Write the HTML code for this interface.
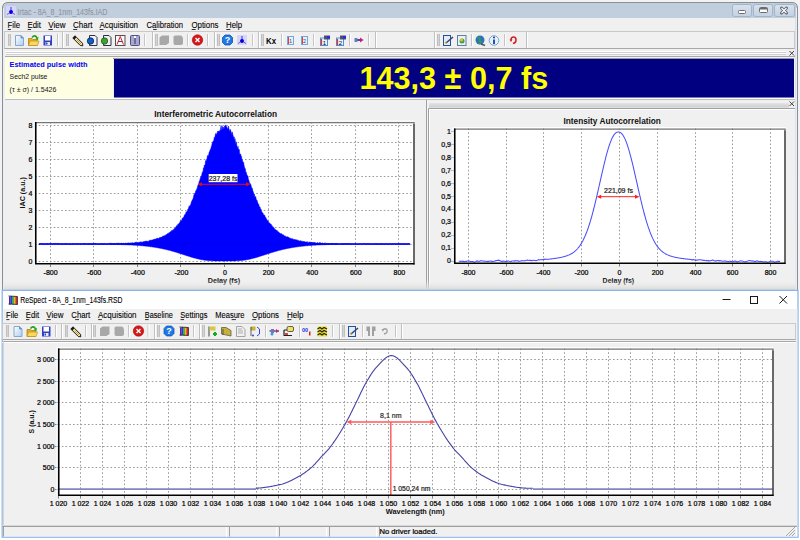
<!DOCTYPE html><html><head><meta charset="utf-8"><style>*{margin:0;padding:0}html,body{width:800px;height:540px;overflow:hidden;background:#fff;position:relative;font-family:"Liberation Sans",sans-serif}</style></head><body><svg width="800" height="540" style="position:absolute;left:0;top:0"><defs><linearGradient id="tbar" x1="0" y1="0" x2="0" y2="1"><stop offset="0" stop-color="#bfcddc"/><stop offset="1" stop-color="#d7e5f2"/></linearGradient><linearGradient id="wbtn" x1="0" y1="0" x2="0" y2="1"><stop offset="0" stop-color="#d8e2ee"/><stop offset="1" stop-color="#c3d1e1"/></linearGradient><linearGradient id="hdr" x1="0" y1="0" x2="0" y2="1"><stop offset="0" stop-color="#e4e4e4"/><stop offset="1" stop-color="#cdcdcd"/></linearGradient></defs>
<rect x="0" y="0" width="800" height="290" fill="#f2f2f2"/>
<path d="M2.5 290 V8 Q2.5 2.5 8 2.5 H792 Q797.5 2.5 797.5 8 V290" fill="url(#tbar)" stroke="#8a8f96" stroke-width="1"/>
<line x1="3.5" y1="8" x2="3.5" y2="290" stroke="#e6eef8" stroke-width="1"/>
<line x1="796.5" y1="8" x2="796.5" y2="290" stroke="#e6eef8" stroke-width="1"/>
<rect x="4" y="18" width="791.5" height="272" fill="#f0f0f0"/>
<g transform="translate(6,6)"><rect x="0" y="0" width="10" height="10" fill="#d8d4fc"/><path d="M5 1 V5" stroke="#3030f0" stroke-width="1"/><circle cx="5" cy="6" r="2" fill="#0000e0"/><path d="M1 8.5 L3.5 7 M9 8.5 L6.5 7" stroke="#5050a0" stroke-width="0.8"/></g>
<text x="17.61" y="14.5" font-family="Liberation Sans" font-size="8.2" fill="#8d96a0" stroke="#8d96a0" stroke-width="0.1" text-anchor="start" textLength="89.78" lengthAdjust="spacingAndGlyphs">Irtac - 8A_8_1nm_143fs.IAD</text>
<rect x="732.5" y="4.5" width="19" height="12" rx="2" fill="url(#wbtn)" stroke="#a5b3c6" stroke-width="1"/>
<rect x="753.5" y="4.5" width="19" height="12" rx="2" fill="url(#wbtn)" stroke="#a5b3c6" stroke-width="1"/>
<rect x="774.5" y="4.5" width="20" height="12" rx="2" fill="url(#wbtn)" stroke="#a5b3c6" stroke-width="1"/>
<rect x="738.5" y="10.5" width="7" height="3" rx="1" fill="#fff" stroke="#6a6a6a" stroke-width="1"/>
<rect x="759.5" y="7.5" width="8" height="5" rx="1" fill="#fff" stroke="#6a6a6a" stroke-width="1"/><rect x="760" y="8" width="7" height="1.5" fill="#6a6a6a"/>
<path d="M781.5 8 L786.5 13 M786.5 8 L781.5 13" stroke="#5d646c" stroke-width="3" stroke-linecap="round"/><path d="M781.5 8 L786.5 13 M786.5 8 L781.5 13" stroke="#ffffff" stroke-width="1.2"/>
<text x="7.56" y="28" font-family="Liberation Sans" font-size="9" fill="#000" stroke="#000" stroke-width="0.1" text-anchor="start" textLength="12.48" lengthAdjust="spacingAndGlyphs">File</text>
<line x1="7.8" y1="29.5" x2="10.95" y2="29.5" stroke="#000" stroke-width="0.8"/>
<text x="27.46" y="28" font-family="Liberation Sans" font-size="9" fill="#000" stroke="#000" stroke-width="0.1" text-anchor="start" textLength="13.38" lengthAdjust="spacingAndGlyphs">Edit</text>
<line x1="27.7" y1="29.5" x2="31.07" y2="29.5" stroke="#000" stroke-width="0.8"/>
<text x="48.26" y="28" font-family="Liberation Sans" font-size="9" fill="#000" stroke="#000" stroke-width="0.1" text-anchor="start" textLength="17.28" lengthAdjust="spacingAndGlyphs">View</text>
<line x1="48.5" y1="29.5" x2="52.85" y2="29.5" stroke="#000" stroke-width="0.8"/>
<text x="72.96" y="28" font-family="Liberation Sans" font-size="9" fill="#000" stroke="#000" stroke-width="0.1" text-anchor="start" textLength="19.58" lengthAdjust="spacingAndGlyphs">Chart</text>
<line x1="73.2" y1="29.5" x2="77.2" y2="29.5" stroke="#000" stroke-width="0.8"/>
<text x="99.46" y="28" font-family="Liberation Sans" font-size="9" fill="#000" stroke="#000" stroke-width="0.1" text-anchor="start" textLength="38.58" lengthAdjust="spacingAndGlyphs">Acquisition</text>
<line x1="99.7" y1="29.5" x2="103.41" y2="29.5" stroke="#000" stroke-width="0.8"/>
<text x="146.46" y="28" font-family="Liberation Sans" font-size="9" fill="#000" stroke="#000" stroke-width="0.1" text-anchor="start" textLength="36.58" lengthAdjust="spacingAndGlyphs">Calibration</text>
<line x1="153.15" y1="29.5" x2="156.68" y2="29.5" stroke="#000" stroke-width="0.8"/>
<text x="191.46" y="28" font-family="Liberation Sans" font-size="9" fill="#000" stroke="#000" stroke-width="0.1" text-anchor="start" textLength="27.08" lengthAdjust="spacingAndGlyphs">Options</text>
<line x1="191.7" y1="29.5" x2="195.71" y2="29.5" stroke="#000" stroke-width="0.8"/>
<text x="226.06" y="28" font-family="Liberation Sans" font-size="9" fill="#000" stroke="#000" stroke-width="0.1" text-anchor="start" textLength="16.08" lengthAdjust="spacingAndGlyphs">Help</text>
<line x1="226.3" y1="29.5" x2="230.35" y2="29.5" stroke="#000" stroke-width="0.8"/>
<rect x="4.5" y="31.5" width="790" height="17" fill="#f0f0f0" stroke="#c9c9c9" stroke-width="1"/>
<line x1="4.5" y1="48.5" x2="794.5" y2="48.5" stroke="#a8a8a8" stroke-width="1"/>
<rect x="8" y="34" width="3" height="12" fill="#d4d4d4"/><line x1="8.5" y1="34" x2="8.5" y2="46" stroke="#c0c0c0" stroke-width="1"/><line x1="10.5" y1="34" x2="10.5" y2="46" stroke="#c0c0c0" stroke-width="1"/>
<g transform="translate(15,35)"><defs><linearGradient id="gdn" x1="0" y1="0" x2="1" y2="1"><stop offset="0" stop-color="#ffffff"/><stop offset="1" stop-color="#a9cdf3"/></linearGradient></defs><path d="M0.5 0.5 H6 L8.5 3 V10.5 H0.5Z" fill="url(#gdn)" stroke="#8aa6c8" stroke-width="1"/><path d="M6 0.5 V3 H8.5" fill="#6a9ad8" stroke="#5a8ac8" stroke-width="0.8"/></g>
<g transform="translate(28,35)"><path d="M0.5 3.5 H4 L5 4.5 H9 V10.5 H0.5Z" fill="#e8b020" stroke="#b08010" stroke-width="0.8"/><path d="M0.5 10.5 L2 6 H11 L9.5 10.5Z" fill="#f8d860" stroke="#c09020" stroke-width="0.7"/><path d="M4 2.5 C6 0 8 0.5 9 3" fill="none" stroke="#20a020" stroke-width="1.6"/><path d="M7.5 3.5 L10.5 1.8 L10 5.5Z" fill="#20b020"/></g>
<g transform="translate(43,35)"><path d="M0.5 0.5 H9 V10.5 H0.5Z" fill="#3040c0"/><rect x="2" y="1" width="5.5" height="4.5" fill="#fff"/><rect x="2.5" y="7" width="4.5" height="3" fill="#e8e8f8"/><rect x="3" y="7.5" width="1.5" height="2" fill="#3040c0"/></g>
<line x1="57.5" y1="34" x2="57.5" y2="46" stroke="#c4c4c4" stroke-width="1"/><line x1="58.5" y1="34" x2="58.5" y2="46" stroke="#ffffff" stroke-width="1"/>
<line x1="62.5" y1="32" x2="62.5" y2="48" stroke="#c0c0c0" stroke-width="1"/><line x1="63.5" y1="32" x2="63.5" y2="48" stroke="#ffffff" stroke-width="1"/>
<rect x="66" y="34" width="3" height="12" fill="#d4d4d4"/><line x1="66.5" y1="34" x2="66.5" y2="46" stroke="#c0c0c0" stroke-width="1"/><line x1="68.5" y1="34" x2="68.5" y2="46" stroke="#c0c0c0" stroke-width="1"/>
<g transform="translate(72,35)"><path d="M0.8 3 L3 0.8 L10.5 8.3 L10.8 10.8 L8.3 10.5 Z" fill="#f0e0a0" stroke="#1a1a1a" stroke-width="1"/><path d="M2.2 4.2 L4.2 2.2 M4.5 4.5 L9 9" stroke="#c8a040" stroke-width="1"/><path d="M0.8 3 L3 0.8 L4.5 2.3 L2.3 4.5Z" fill="#1a1a1a"/></g>
<g transform="translate(87,35)"><path d="M2.5 0.5 H8 L10 2.5 V10.5 H2.5Z" fill="#f0f0f8" stroke="#303040" stroke-width="1"/><circle cx="3.5" cy="6" r="3.2" fill="#1060c0" stroke="#002060" stroke-width="0.8"/></g>
<g transform="translate(101,35)"><path d="M2.5 0.5 H8 L10 2.5 V10.5 H2.5Z" fill="#f0f0f8" stroke="#303040" stroke-width="1"/><circle cx="3.5" cy="6" r="3.2" fill="#40a030" stroke="#206010" stroke-width="0.8"/></g>
<g transform="translate(115,35)"><rect x="0.5" y="0.5" width="9.5" height="10" fill="#f8f8f8" stroke="#505050" stroke-width="1"/><path d="M2 9.5 L5.25 1.5 L8.5 9.5 M3.2 6.5 H7.3" fill="none" stroke="#e02020" stroke-width="1"/><path d="M3.5 6.5 H7" stroke="#2040d0" stroke-width="0.8"/></g>
<g transform="translate(130,35)"><rect x="0.5" y="0.5" width="9" height="10" rx="1" fill="#a8a8d0" stroke="#505080" stroke-width="1"/><path d="M5 2 V9" stroke="#303070" stroke-width="1"/><rect x="4" y="1" width="2" height="2" fill="#fff"/></g>
<line x1="144.5" y1="34" x2="144.5" y2="46" stroke="#c4c4c4" stroke-width="1"/><line x1="145.5" y1="34" x2="145.5" y2="46" stroke="#ffffff" stroke-width="1"/>
<line x1="152.5" y1="32" x2="152.5" y2="48" stroke="#c0c0c0" stroke-width="1"/><line x1="153.5" y1="32" x2="153.5" y2="48" stroke="#ffffff" stroke-width="1"/>
<rect x="155" y="34" width="3" height="12" fill="#d4d4d4"/><line x1="155.5" y1="34" x2="155.5" y2="46" stroke="#c0c0c0" stroke-width="1"/><line x1="157.5" y1="34" x2="157.5" y2="46" stroke="#c0c0c0" stroke-width="1"/>
<g transform="translate(159,35)"><path d="M0.5 2.5 L3 0.5 H10 V8 L7 10 H0.5Z" fill="#a8a8a8"/></g>
<g transform="translate(173,35)"><path d="M0.5 1.5 Q0.5 0.5 3 0.5 H8 Q10 1 10 4 V8 Q10 10 7 10 H2 Q0.5 10 0.5 8Z" fill="#a8a8a8"/></g>
<line x1="187.5" y1="34" x2="187.5" y2="46" stroke="#c4c4c4" stroke-width="1"/><line x1="188.5" y1="34" x2="188.5" y2="46" stroke="#ffffff" stroke-width="1"/>
<g transform="translate(192,34.5)"><circle cx="5.5" cy="5.5" r="5.2" fill="#d81818" stroke="#a00000" stroke-width="0.6"/><path d="M3.5 3.5 L7.5 7.5 M7.5 3.5 L3.5 7.5" stroke="#fff" stroke-width="1.4"/></g>
<line x1="207.5" y1="34" x2="207.5" y2="46" stroke="#c4c4c4" stroke-width="1"/><line x1="208.5" y1="34" x2="208.5" y2="46" stroke="#ffffff" stroke-width="1"/>
<line x1="214.5" y1="32" x2="214.5" y2="48" stroke="#c0c0c0" stroke-width="1"/><line x1="215.5" y1="32" x2="215.5" y2="48" stroke="#ffffff" stroke-width="1"/>
<rect x="217" y="34" width="3" height="12" fill="#d4d4d4"/><line x1="217.5" y1="34" x2="217.5" y2="46" stroke="#c0c0c0" stroke-width="1"/><line x1="219.5" y1="34" x2="219.5" y2="46" stroke="#c0c0c0" stroke-width="1"/>
<g transform="translate(222,34.5)"><path d="M3 0.5 H8 L10.5 3 V8 L8 10.5 H3 L0.5 8 V3Z" fill="#1e78e8" stroke="#0a4aa0" stroke-width="0.7"/><text x="5.5" y="8.8" text-anchor="middle" font-family="Liberation Sans" font-weight="bold" font-size="9" fill="#fff">?</text></g>
<g transform="translate(237,35)"><rect x="0" y="0" width="10" height="10" fill="#d8d4fc"/><path d="M5 1 V5" stroke="#3030f0" stroke-width="1"/><circle cx="5" cy="6" r="2" fill="#0000e0"/><path d="M1 8.5 L3.5 7 M9 8.5 L6.5 7" stroke="#5050a0" stroke-width="0.8"/></g>
<line x1="252.5" y1="34" x2="252.5" y2="46" stroke="#c4c4c4" stroke-width="1"/><line x1="253.5" y1="34" x2="253.5" y2="46" stroke="#ffffff" stroke-width="1"/>
<line x1="258.5" y1="32" x2="258.5" y2="48" stroke="#c0c0c0" stroke-width="1"/><line x1="259.5" y1="32" x2="259.5" y2="48" stroke="#ffffff" stroke-width="1"/>
<rect x="261" y="34" width="3" height="12" fill="#d4d4d4"/><line x1="261.5" y1="34" x2="261.5" y2="46" stroke="#c0c0c0" stroke-width="1"/><line x1="263.5" y1="34" x2="263.5" y2="46" stroke="#c0c0c0" stroke-width="1"/>
<text x="266" y="43.5" font-family="Liberation Sans" font-weight="bold" font-size="8.5" fill="#000" textLength="10" lengthAdjust="spacingAndGlyphs">Kx</text>
<line x1="281.5" y1="34" x2="281.5" y2="46" stroke="#c4c4c4" stroke-width="1"/><line x1="282.5" y1="34" x2="282.5" y2="46" stroke="#ffffff" stroke-width="1"/>
<g transform="translate(287,35)"><rect x="0.5" y="1.5" width="6" height="8" fill="#e8f0f8" stroke="#70a8e0" stroke-width="1"/><path d="M1.5 2 V9" stroke="#e04040" stroke-width="1"/><text x="3.5" y="8" font-family="Liberation Sans" font-size="5.5" fill="#404080" text-anchor="middle">1</text></g>
<g transform="translate(301,35)"><rect x="0.5" y="1.5" width="6" height="8" fill="#e8f0f8" stroke="#70a8e0" stroke-width="1"/><path d="M1.5 2 V9" stroke="#e04040" stroke-width="1"/><text x="3.5" y="8" font-family="Liberation Sans" font-size="5.5" fill="#404080" text-anchor="middle">2</text></g>
<line x1="313.5" y1="34" x2="313.5" y2="46" stroke="#c4c4c4" stroke-width="1"/><line x1="314.5" y1="34" x2="314.5" y2="46" stroke="#ffffff" stroke-width="1"/>
<g transform="translate(320,35)"><rect x="0.5" y="3" width="7" height="7.5" fill="#f0f4fa" stroke="#4a90d8" stroke-width="1"/><rect x="4" y="0.5" width="6" height="4" fill="#505070"/><rect x="7" y="1" width="3" height="2.5" fill="#2030e0"/><path d="M1.5 4 V10" stroke="#e03030" stroke-width="1.3"/><text x="4.5" y="9.5" font-family="Liberation Sans" font-size="6" fill="#000" text-anchor="middle">1</text></g>
<g transform="translate(336,35)"><rect x="0.5" y="3" width="7" height="7.5" fill="#f0f4fa" stroke="#4a90d8" stroke-width="1"/><rect x="4" y="0.5" width="6" height="4" fill="#505070"/><rect x="7" y="1" width="3" height="2.5" fill="#2030e0"/><path d="M1.5 4 V10" stroke="#e03030" stroke-width="1.3"/><text x="4.5" y="9.5" font-family="Liberation Sans" font-size="6" fill="#000" text-anchor="middle">2</text></g>
<line x1="349.5" y1="34" x2="349.5" y2="46" stroke="#c4c4c4" stroke-width="1"/><line x1="350.5" y1="34" x2="350.5" y2="46" stroke="#ffffff" stroke-width="1"/>
<g transform="translate(354,35)"><path d="M1 5 H8" stroke="#704090" stroke-width="2"/><path d="M6 2.5 L9.5 5 L6 7.5Z" fill="#c02080"/><rect x="0.5" y="3" width="3" height="4" fill="#6080c0"/></g>
<line x1="368.5" y1="34" x2="368.5" y2="46" stroke="#c4c4c4" stroke-width="1"/><line x1="369.5" y1="34" x2="369.5" y2="46" stroke="#ffffff" stroke-width="1"/>
<line x1="375.5" y1="32" x2="375.5" y2="48" stroke="#c0c0c0" stroke-width="1"/><line x1="376.5" y1="32" x2="376.5" y2="48" stroke="#ffffff" stroke-width="1"/>
<line x1="434.5" y1="32" x2="434.5" y2="48" stroke="#c0c0c0" stroke-width="1"/><line x1="435.5" y1="32" x2="435.5" y2="48" stroke="#ffffff" stroke-width="1"/>
<rect x="437" y="34" width="3" height="12" fill="#d4d4d4"/><line x1="437.5" y1="34" x2="437.5" y2="46" stroke="#c0c0c0" stroke-width="1"/><line x1="439.5" y1="34" x2="439.5" y2="46" stroke="#c0c0c0" stroke-width="1"/>
<g transform="translate(443,35)"><rect x="0.5" y="0.5" width="7" height="10" fill="#e0ecf8" stroke="#2050a0" stroke-width="1"/><path d="M3 8 L10 2" stroke="#404060" stroke-width="1.5"/><path d="M2 7 L3.5 8.5" stroke="#e0a020" stroke-width="1.2"/></g>
<g transform="translate(457,35)"><rect x="0.5" y="0.5" width="8.5" height="10" fill="#e8f0f8" stroke="#6080a0" stroke-width="1"/><circle cx="5" cy="6" r="2.5" fill="#40a040"/><circle cx="4.5" cy="5" r="1.5" fill="#e8c030"/></g>
<line x1="471.5" y1="34" x2="471.5" y2="46" stroke="#c4c4c4" stroke-width="1"/><line x1="472.5" y1="34" x2="472.5" y2="46" stroke="#ffffff" stroke-width="1"/>
<g transform="translate(475,35)"><circle cx="5" cy="5" r="4.5" fill="#3070c0"/><path d="M2 3 Q4 2 5 4 Q4 6 6 7 L4 9" fill="none" stroke="#30a040" stroke-width="1.6"/><path d="M6 9 L10 10.5" stroke="#505070" stroke-width="1.5"/></g>
<g transform="translate(489,35)"><circle cx="5" cy="5.5" r="4.8" fill="#e8f0f8" stroke="#6090c8" stroke-width="0.8"/><path d="M5 4.5 V9" stroke="#1040a0" stroke-width="1.8"/><circle cx="5" cy="2.5" r="1" fill="#1040a0"/></g>
<line x1="504.5" y1="34" x2="504.5" y2="46" stroke="#c4c4c4" stroke-width="1"/><line x1="505.5" y1="34" x2="505.5" y2="46" stroke="#ffffff" stroke-width="1"/>
<g transform="translate(509,35)"><path d="M2 5 Q2 2 4.5 2 Q7 2 7 5 Q7 8 4 8.5" fill="none" stroke="#d02020" stroke-width="1.5"/><path d="M0.5 4.5 L3.5 4.5 L2 7Z" fill="#d02020"/></g>
<line x1="526.5" y1="32" x2="526.5" y2="48" stroke="#c0c0c0" stroke-width="1"/><line x1="527.5" y1="32" x2="527.5" y2="48" stroke="#ffffff" stroke-width="1"/>
<rect x="5" y="49" width="790" height="8" fill="#f0f0f0"/>
<line x1="6" y1="52.5" x2="786" y2="52.5" stroke="#cfcfcf" stroke-width="1"/>
<line x1="6" y1="54.5" x2="786" y2="54.5" stroke="#cfcfcf" stroke-width="1"/>
<line x1="6" y1="51.5" x2="786" y2="51.5" stroke="#ffffff" stroke-width="1"/>
<line x1="6" y1="53.5" x2="786" y2="53.5" stroke="#ffffff" stroke-width="1"/>
<path d="M789.5 51 L794 55.5 M794 51 L789.5 55.5" stroke="#404040" stroke-width="1"/>
<line x1="5" y1="56.5" x2="795" y2="56.5" stroke="#a9a9a9" stroke-width="1"/>
<rect x="5" y="57" width="108" height="42" fill="#fefee3"/>
<rect x="113" y="57" width="682" height="42" fill="#f0f0f0"/>
<rect x="113" y="58" width="681" height="1" fill="#9a9a9a"/>
<rect x="114" y="59" width="680" height="38.5" fill="#000080"/>
<text x="9.56" y="66.8" font-family="Liberation Sans" font-size="7.3" font-weight="bold" fill="#0000ff" text-anchor="start" textLength="77.88" lengthAdjust="spacingAndGlyphs">Estimated pulse width</text>
<text x="9.58" y="78.8" font-family="Liberation Sans" font-size="7" fill="#141414" text-anchor="start" textLength="37.84" lengthAdjust="spacingAndGlyphs">Sech2 pulse</text>
<text x="9.58" y="91.8" font-family="Liberation Sans" font-size="7" fill="#141414" text-anchor="start" textLength="46.84" lengthAdjust="spacingAndGlyphs">(τ ± σ) / 1.5426</text>
<text x="359.53" y="88.9" font-family="Liberation Sans" font-size="31.2" font-weight="bold" fill="#ffff00" text-anchor="start" textLength="188.64" lengthAdjust="spacingAndGlyphs">143,3 ± 0,7 fs</text>
<line x1="5" y1="98.5" x2="795" y2="98.5" stroke="#ffffff" stroke-width="1"/>
<line x1="5" y1="99.5" x2="795" y2="99.5" stroke="#bcbcbc" stroke-width="1"/>
<line x1="426.5" y1="100" x2="426.5" y2="290" stroke="#a0a0a0" stroke-width="1"/>
<line x1="427.5" y1="100" x2="427.5" y2="290" stroke="#f4f4f4" stroke-width="1"/>
<rect x="429" y="103" width="360" height="4.5" fill="url(#hdr)"/>
<path d="M789.5 101.5 L794 106 M794 101.5 L789.5 106" stroke="#404040" stroke-width="1"/>
<line x1="428.5" y1="108.5" x2="795" y2="108.5" stroke="#a0a0a0" stroke-width="1"/>
<line x1="428.5" y1="108.5" x2="428.5" y2="290" stroke="#a0a0a0" stroke-width="1"/>
<line x1="429" y1="109.5" x2="795" y2="109.5" stroke="#ffffff" stroke-width="1"/>
<line x1="429.5" y1="109.5" x2="429.5" y2="290" stroke="#ffffff" stroke-width="1"/>
<rect x="35" y="122" width="379.5" height="142.5" fill="#fff"/>
<line x1="35" y1="261.5" x2="414.5" y2="261.5" stroke="#9a9a9a" stroke-width="1" stroke-dasharray="1.6,2.15"/>
<text x="32.3" y="264" font-family="Liberation Sans" font-size="7" fill="#000" stroke="#000" stroke-width="0.22" text-anchor="end">0</text>
<line x1="35" y1="244.5" x2="414.5" y2="244.5" stroke="#9a9a9a" stroke-width="1" stroke-dasharray="1.6,2.15"/>
<text x="32.3" y="247" font-family="Liberation Sans" font-size="7" fill="#000" stroke="#000" stroke-width="0.22" text-anchor="end">1</text>
<line x1="35" y1="227.5" x2="414.5" y2="227.5" stroke="#9a9a9a" stroke-width="1" stroke-dasharray="1.6,2.15"/>
<text x="32.3" y="230" font-family="Liberation Sans" font-size="7" fill="#000" stroke="#000" stroke-width="0.22" text-anchor="end">2</text>
<line x1="35" y1="210.5" x2="414.5" y2="210.5" stroke="#9a9a9a" stroke-width="1" stroke-dasharray="1.6,2.15"/>
<text x="32.3" y="213" font-family="Liberation Sans" font-size="7" fill="#000" stroke="#000" stroke-width="0.22" text-anchor="end">3</text>
<line x1="35" y1="193.5" x2="414.5" y2="193.5" stroke="#9a9a9a" stroke-width="1" stroke-dasharray="1.6,2.15"/>
<text x="32.3" y="196" font-family="Liberation Sans" font-size="7" fill="#000" stroke="#000" stroke-width="0.22" text-anchor="end">4</text>
<line x1="35" y1="176.5" x2="414.5" y2="176.5" stroke="#9a9a9a" stroke-width="1" stroke-dasharray="1.6,2.15"/>
<text x="32.3" y="179" font-family="Liberation Sans" font-size="7" fill="#000" stroke="#000" stroke-width="0.22" text-anchor="end">5</text>
<line x1="35" y1="159.5" x2="414.5" y2="159.5" stroke="#9a9a9a" stroke-width="1" stroke-dasharray="1.6,2.15"/>
<text x="32.3" y="162" font-family="Liberation Sans" font-size="7" fill="#000" stroke="#000" stroke-width="0.22" text-anchor="end">6</text>
<line x1="35" y1="142.5" x2="414.5" y2="142.5" stroke="#9a9a9a" stroke-width="1" stroke-dasharray="1.6,2.15"/>
<text x="32.3" y="145" font-family="Liberation Sans" font-size="7" fill="#000" stroke="#000" stroke-width="0.22" text-anchor="end">7</text>
<line x1="35" y1="125.5" x2="414.5" y2="125.5" stroke="#9a9a9a" stroke-width="1" stroke-dasharray="1.6,2.15"/>
<text x="32.3" y="128" font-family="Liberation Sans" font-size="7" fill="#000" stroke="#000" stroke-width="0.22" text-anchor="end">8</text>
<line x1="50.5" y1="122" x2="50.5" y2="264.5" stroke="#9a9a9a" stroke-width="1" stroke-dasharray="1.6,2.15"/>
<text x="50.6" y="274.75" font-family="Liberation Sans" font-size="7" fill="#000" stroke="#000" stroke-width="0.22" text-anchor="middle">-800</text>
<line x1="50.5" y1="264.5" x2="50.5" y2="267" stroke="#808080" stroke-width="1"/>
<line x1="93.5" y1="122" x2="93.5" y2="264.5" stroke="#9a9a9a" stroke-width="1" stroke-dasharray="1.6,2.15"/>
<text x="94.2" y="274.75" font-family="Liberation Sans" font-size="7" fill="#000" stroke="#000" stroke-width="0.22" text-anchor="middle">-600</text>
<line x1="93.5" y1="264.5" x2="93.5" y2="267" stroke="#808080" stroke-width="1"/>
<line x1="137.5" y1="122" x2="137.5" y2="264.5" stroke="#9a9a9a" stroke-width="1" stroke-dasharray="1.6,2.15"/>
<text x="137.8" y="274.75" font-family="Liberation Sans" font-size="7" fill="#000" stroke="#000" stroke-width="0.22" text-anchor="middle">-400</text>
<line x1="137.5" y1="264.5" x2="137.5" y2="267" stroke="#808080" stroke-width="1"/>
<line x1="180.5" y1="122" x2="180.5" y2="264.5" stroke="#9a9a9a" stroke-width="1" stroke-dasharray="1.6,2.15"/>
<text x="181.4" y="274.75" font-family="Liberation Sans" font-size="7" fill="#000" stroke="#000" stroke-width="0.22" text-anchor="middle">-200</text>
<line x1="180.5" y1="264.5" x2="180.5" y2="267" stroke="#808080" stroke-width="1"/>
<line x1="224.5" y1="122" x2="224.5" y2="264.5" stroke="#9a9a9a" stroke-width="1" stroke-dasharray="1.6,2.15"/>
<text x="225" y="274.75" font-family="Liberation Sans" font-size="7" fill="#000" stroke="#000" stroke-width="0.22" text-anchor="middle">0</text>
<line x1="224.5" y1="264.5" x2="224.5" y2="267" stroke="#808080" stroke-width="1"/>
<line x1="268.5" y1="122" x2="268.5" y2="264.5" stroke="#9a9a9a" stroke-width="1" stroke-dasharray="1.6,2.15"/>
<text x="268.6" y="274.75" font-family="Liberation Sans" font-size="7" fill="#000" stroke="#000" stroke-width="0.22" text-anchor="middle">200</text>
<line x1="268.5" y1="264.5" x2="268.5" y2="267" stroke="#808080" stroke-width="1"/>
<line x1="311.5" y1="122" x2="311.5" y2="264.5" stroke="#9a9a9a" stroke-width="1" stroke-dasharray="1.6,2.15"/>
<text x="312.2" y="274.75" font-family="Liberation Sans" font-size="7" fill="#000" stroke="#000" stroke-width="0.22" text-anchor="middle">400</text>
<line x1="311.5" y1="264.5" x2="311.5" y2="267" stroke="#808080" stroke-width="1"/>
<line x1="355.5" y1="122" x2="355.5" y2="264.5" stroke="#9a9a9a" stroke-width="1" stroke-dasharray="1.6,2.15"/>
<text x="355.8" y="274.75" font-family="Liberation Sans" font-size="7" fill="#000" stroke="#000" stroke-width="0.22" text-anchor="middle">600</text>
<line x1="355.5" y1="264.5" x2="355.5" y2="267" stroke="#808080" stroke-width="1"/>
<line x1="398.5" y1="122" x2="398.5" y2="264.5" stroke="#9a9a9a" stroke-width="1" stroke-dasharray="1.6,2.15"/>
<text x="399.4" y="274.75" font-family="Liberation Sans" font-size="7" fill="#000" stroke="#000" stroke-width="0.22" text-anchor="middle">800</text>
<line x1="398.5" y1="264.5" x2="398.5" y2="267" stroke="#808080" stroke-width="1"/>
<polygon points="38.88,244.53 39.31,244.49 39.75,244.15 40.18,243.54 40.61,244.05 41.04,243.6 41.47,244.19 41.91,244.04 42.34,243.7 42.77,243.87 43.2,244.23 43.63,244.08 44.07,243.91 44.5,244.13 44.93,244.34 45.36,244.31 45.79,243.79 46.22,244.33 46.66,244.35 47.09,244.25 47.52,243.53 47.95,243.53 48.38,244.05 48.82,244.32 49.25,244.09 49.68,243.64 50.11,243.95 50.54,243.62 50.98,243.64 51.41,243.71 51.84,243.64 52.27,244.01 52.7,244.36 53.14,243.74 53.57,243.53 54,243.86 54.43,244.28 54.86,243.59 55.3,243.59 55.73,243.59 56.16,243.86 56.59,243.58 57.02,244.3 57.46,243.95 57.89,243.52 58.32,243.52 58.75,243.72 59.18,243.93 59.62,243.89 60.05,244.13 60.48,244.3 60.91,243.62 61.34,243.93 61.77,244.16 62.21,244.19 62.64,244.35 63.07,244.34 63.5,243.85 63.93,244.23 64.37,244.2 64.8,243.66 65.23,244.43 65.66,243.56 66.09,244.1 66.53,243.68 66.96,243.68 67.39,243.83 67.82,244.47 68.25,243.85 68.69,244.06 69.12,244.2 69.55,243.99 69.98,243.84 70.41,244.12 70.85,244.1 71.28,244.29 71.71,244.34 72.14,243.88 72.57,243.52 73.01,244.41 73.44,243.84 73.87,243.9 74.3,243.75 74.73,244.18 75.16,244.24 75.6,244.21 76.03,243.65 76.46,243.64 76.89,243.67 77.32,244.21 77.76,244.11 78.19,244.2 78.62,243.8 79.05,244.25 79.48,243.74 79.92,243.68 80.35,243.95 80.78,244.31 81.21,244.22 81.64,243.91 82.08,243.73 82.51,244.28 82.94,243.82 83.37,243.55 83.8,243.73 84.24,243.57 84.67,243.5 85.1,244.19 85.53,244.26 85.96,243.55 86.4,244.07 86.83,244.35 87.26,243.82 87.69,243.97 88.12,244.26 88.56,243.52 88.99,243.96 89.42,243.44 89.85,244.16 90.28,244.38 90.71,243.52 91.15,244.14 91.58,243.49 92.01,243.94 92.44,243.72 92.87,244.31 93.31,244.15 93.74,243.73 94.17,243.45 94.6,243.58 95.03,243.49 95.47,243.62 95.9,243.41 96.33,244.16 96.76,244.27 97.19,244.15 97.63,243.8 98.06,244.01 98.49,244.34 98.92,244.25 99.35,244.08 99.79,244.02 100.22,244.04 100.65,243.78 101.08,243.68 101.51,243.49 101.95,243.96 102.38,243.38 102.81,243.94 103.24,243.9 103.67,243.9 104.1,243.54 104.54,243.56 104.97,243.87 105.4,243.95 105.83,244.21 106.26,244.03 106.7,244.2 107.13,243.93 107.56,244.07 107.99,243.6 108.42,243.49 108.86,243.74 109.29,243.74 109.72,243.88 110.15,243.24 110.58,243.2 111.02,243.55 111.45,243.33 111.88,243.8 112.31,243.58 112.74,243.79 113.18,243.19 113.61,243.53 114.04,243.22 114.47,243.5 114.9,244.03 115.34,243.79 115.77,243.49 116.2,243.15 116.63,243.4 117.06,243.69 117.49,243.37 117.93,243.39 118.36,243.03 118.79,243.38 119.22,243.98 119.65,242.97 120.09,243.81 120.52,243.58 120.95,242.95 121.38,243.23 121.81,243.2 122.25,243.44 122.68,243.46 123.11,243.54 123.54,243.05 123.97,243.44 124.41,243.67 124.84,243.57 125.27,243.61 125.7,242.82 126.13,243.44 126.57,243.46 127,243 127.43,243.34 127.86,242.8 128.29,242.9 128.73,242.97 129.16,243.06 129.59,243.14 130.02,243.05 130.45,242.75 130.89,243.38 131.32,243.18 131.75,242.67 132.18,242.63 132.61,242.74 133.04,243.03 133.48,243.03 133.91,242.68 134.34,242.92 134.77,242.4 135.2,242.34 135.64,242.35 136.07,242.4 136.5,242.1 136.93,242.41 137.36,242.64 137.8,242.64 138.23,242.74 138.66,242.17 139.09,241.97 139.52,242.08 139.96,242.52 140.39,241.89 140.82,241.79 141.25,242.13 141.68,241.89 142.12,242.31 142.55,241.72 142.98,242.25 143.41,241.87 143.84,241.33 144.28,241.46 144.71,241.65 145.14,241.02 145.57,241.27 146,240.88 146.43,241.24 146.87,240.99 147.3,240.94 147.73,241.46 148.16,241.29 148.59,241.23 149.03,241.04 149.46,240.2 149.89,240.4 150.32,240.29 150.75,239.95 151.19,240.62 151.62,239.95 152.05,240.07 152.48,240.12 152.91,239.62 153.35,239.5 153.78,239.56 154.21,239.33 154.64,239.03 155.07,239.47 155.51,238.86 155.94,239.03 156.37,238.5 156.8,238.6 157.23,238.49 157.67,238.01 158.1,238.29 158.53,238.47 158.96,237.99 159.39,238 159.83,237.25 160.26,237.79 160.69,237.19 161.12,237.05 161.55,237.29 161.98,236.64 162.42,236.43 162.85,236.38 163.28,235.72 163.71,236.35 164.14,235.71 164.58,235.68 165.01,235.39 165.44,235.19 165.87,234.74 166.3,234.3 166.74,234.71 167.17,234.08 167.6,233.48 168.03,233.62 168.46,233.21 168.9,232.63 169.33,232.97 169.76,232.2 170.19,231.73 170.62,231.49 171.06,231.76 171.49,230.36 171.92,231.16 172.35,230.74 172.78,229.76 173.22,230.19 173.65,229.37 174.08,228.69 174.51,228.5 174.94,228.15 175.37,227.25 175.81,227.64 176.24,226.08 176.67,225.93 177.1,225.21 177.53,225.66 177.97,223.97 178.4,224.34 178.83,223.52 179.26,222.9 179.69,222.52 180.13,221.74 180.56,220.54 180.99,220.66 181.42,220.84 181.85,219.63 182.29,217.89 182.72,219.01 183.15,217.87 183.58,216.97 184.01,216.85 184.45,214.78 184.88,214.83 185.31,214.27 185.74,213.15 186.17,211.65 186.61,212.16 187.04,211.27 187.47,210.99 187.9,208.94 188.33,208.63 188.76,207.28 189.2,205.75 189.63,206.69 190.06,205.67 190.49,204.73 190.92,203.9 191.36,201.71 191.79,201.2 192.22,199.94 192.65,199.46 193.08,198.54 193.52,196.85 193.95,194.55 194.38,194.33 194.81,193.08 195.24,192.83 195.68,190.85 196.11,190.77 196.54,189.25 196.97,188.97 197.4,186.97 197.84,185.55 198.27,184.67 198.7,184.6 199.13,181.27 199.56,181.31 200,179.17 200.43,177.88 200.86,176.46 201.29,176.38 201.72,175.11 202.16,172.69 202.59,171.73 203.02,171.63 203.45,167.68 203.88,169.59 204.31,165 204.75,166.3 205.18,164.06 205.61,160.52 206.04,162 206.47,159.37 206.91,159.6 207.34,155.7 207.77,155.4 208.2,155.53 208.63,154.92 209.07,152.59 209.5,151.52 209.93,150.66 210.36,149.14 210.79,148.69 211.23,146.71 211.66,145.72 212.09,143.71 212.52,142.06 212.95,141.56 213.39,140.96 213.82,140.27 214.25,137.37 214.68,138.17 215.11,135.63 215.55,133.8 215.98,133.22 216.41,133.96 216.84,134.48 217.27,132.31 217.7,131.04 218.14,131.84 218.57,131.18 219,130.81 219.43,132.01 219.86,130.13 220.3,130.42 220.73,127.56 221.16,125.48 221.59,129.8 222.02,129.98 222.46,126.33 222.89,127.61 223.32,126.94 223.75,128.66 224.18,128.3 224.62,126.24 225.05,125.94 225.48,125.15 225.91,124.89 226.34,128.05 226.78,126.46 227.21,127.8 227.64,128.4 228.07,129.01 228.5,126.08 228.94,128.96 229.37,131.85 229.8,129.87 230.23,129.23 230.66,130.23 231.1,132.03 231.53,134.77 231.96,131.89 232.39,132.17 232.82,134.43 233.25,136.34 233.69,138.09 234.12,136.7 234.55,140.95 234.98,138.61 235.41,141.24 235.85,143.91 236.28,141.81 236.71,144.58 237.14,147.17 237.57,148.16 238.01,146.13 238.44,149.89 238.87,149.02 239.3,149.59 239.73,154.16 240.17,154.09 240.6,154 241.03,155.82 241.46,156.36 241.89,159.13 242.33,159.6 242.76,161.93 243.19,161.94 243.62,162.32 244.05,165.22 244.49,166.9 244.92,168.73 245.35,168.68 245.78,171.9 246.21,172.1 246.64,174.08 247.08,175.22 247.51,175.81 247.94,175.99 248.37,179.37 248.8,179.93 249.24,181.65 249.67,183.16 250.1,183.63 250.53,183.8 250.96,184.92 251.4,187.02 251.83,188.3 252.26,188.11 252.69,190.37 253.12,191.47 253.56,192.55 253.99,194.79 254.42,193.98 254.85,197.13 255.28,196.62 255.72,196.67 256.15,198.86 256.58,200.57 257.01,200.12 257.44,201.64 257.88,203.1 258.31,204.5 258.74,203.9 259.17,206.79 259.6,206.82 260.04,206.79 260.47,209.18 260.9,208.92 261.33,210.28 261.76,211.43 262.19,212.49 262.63,212.73 263.06,213.33 263.49,214.52 263.92,214.91 264.35,214.85 264.79,215.61 265.22,217.03 265.65,217.61 266.08,217.66 266.51,219.56 266.95,219.59 267.38,220.2 267.81,220.83 268.24,220.98 268.67,222.28 269.11,223.08 269.54,222.87 269.97,223.44 270.4,224.18 270.83,223.84 271.27,224.56 271.7,225.46 272.13,225.55 272.56,227.11 272.99,227.34 273.43,226.95 273.86,227.76 274.29,228.32 274.72,228.96 275.15,229.64 275.58,229.61 276.02,230.11 276.45,230.04 276.88,231.25 277.31,230.53 277.74,231.81 278.18,231.9 278.61,231.81 279.04,232.47 279.47,233.1 279.9,232.96 280.34,233.49 280.77,233.9 281.2,233.22 281.63,234.32 282.06,234.19 282.5,234.6 282.93,235.04 283.36,234.64 283.79,235.34 284.22,235.9 284.66,235.93 285.09,235.78 285.52,236.27 285.95,236.67 286.38,236.7 286.82,237.07 287.25,236.95 287.68,236.64 288.11,236.86 288.54,237.43 288.97,237.31 289.41,238.26 289.84,237.92 290.27,237.93 290.7,238.56 291.13,238.47 291.57,238.65 292,239.2 292.43,238.44 292.86,239.16 293.29,239.11 293.73,239.79 294.16,239.44 294.59,239.62 295.02,239.3 295.45,240.2 295.89,239.53 296.32,240.3 296.75,239.74 297.18,239.93 297.61,240.22 298.05,240.56 298.48,240.56 298.91,240.42 299.34,240.81 299.77,241.19 300.21,240.63 300.64,240.7 301.07,241.22 301.5,241.38 301.93,240.74 302.37,241.39 302.8,241.76 303.23,241 303.66,241.73 304.09,241.62 304.52,241.51 304.96,241.68 305.39,241.99 305.82,242.03 306.25,241.82 306.68,242.26 307.12,241.53 307.55,242.23 307.98,242.4 308.41,242.42 308.84,242.45 309.28,241.77 309.71,242.31 310.14,242.03 310.57,242 311,242.79 311.44,242.29 311.87,242.13 312.3,242.77 312.73,242.1 313.16,242.54 313.6,242.6 314.03,242.14 314.46,243 314.89,242.28 315.32,243 315.76,242.72 316.19,243.25 316.62,242.99 317.05,243.13 317.48,242.62 317.91,242.43 318.35,243.32 318.78,243.43 319.21,242.85 319.64,242.55 320.07,242.59 320.51,242.72 320.94,242.88 321.37,243.06 321.8,243.65 322.23,242.74 322.67,243.13 323.1,243.25 323.53,243.73 323.96,243.6 324.39,243.44 324.83,242.83 325.26,243.18 325.69,243.13 326.12,243.48 326.55,243.13 326.99,243.69 327.42,243.63 327.85,243.38 328.28,243.77 328.71,243.06 329.15,243.72 329.58,243.5 330.01,243.05 330.44,243.64 330.87,243.44 331.31,243.34 331.74,243.61 332.17,243.8 332.6,243.55 333.03,243.28 333.46,243.68 333.9,243.41 334.33,243.87 334.76,243.74 335.19,243.19 335.62,244.09 336.06,243.23 336.49,244.12 336.92,243.36 337.35,243.81 337.78,243.49 338.22,243.97 338.65,244.04 339.08,244.13 339.51,244.23 339.94,243.86 340.38,244.21 340.81,243.97 341.24,243.37 341.67,243.56 342.1,243.85 342.54,244.26 342.97,244.24 343.4,243.29 343.83,243.86 344.26,243.7 344.7,243.56 345.13,243.7 345.56,243.56 345.99,243.76 346.42,243.83 346.85,243.88 347.29,243.44 347.72,243.35 348.15,243.97 348.58,244.15 349.01,243.42 349.45,244.08 349.88,243.64 350.31,244.14 350.74,243.78 351.17,244.06 351.61,244.35 352.04,244.37 352.47,244.09 352.9,243.93 353.33,243.96 353.77,243.96 354.2,243.9 354.63,244.28 355.06,243.76 355.49,243.64 355.93,243.98 356.36,243.96 356.79,244.3 357.22,244.4 357.65,244.19 358.09,244 358.52,244.33 358.95,244.08 359.38,243.97 359.81,243.9 360.24,243.71 360.68,243.92 361.11,244.28 361.54,244.15 361.97,244.02 362.4,243.91 362.84,244.04 363.27,244.07 363.7,243.54 364.13,243.79 364.56,243.53 365,244.3 365.43,243.79 365.86,243.99 366.29,244.15 366.72,244.43 367.16,243.58 367.59,244.48 368.02,243.65 368.45,244.11 368.88,243.62 369.32,244.46 369.75,244.45 370.18,244.09 370.61,243.87 371.04,243.83 371.48,244.2 371.91,243.85 372.34,244.09 372.77,244.33 373.2,244.37 373.64,244.25 374.07,243.6 374.5,244.22 374.93,243.94 375.36,244.37 375.79,243.51 376.23,243.6 376.66,244.34 377.09,244.29 377.52,243.62 377.95,244.21 378.39,244.41 378.82,243.91 379.25,244.37 379.68,244.44 380.11,243.87 380.55,243.53 380.98,244.33 381.41,243.65 381.84,243.88 382.27,243.64 382.71,244.18 383.14,244.17 383.57,243.94 384,244.3 384.43,244.21 384.87,244.4 385.3,243.67 385.73,244.04 386.16,244.38 386.59,243.6 387.03,244.31 387.46,244.48 387.89,244.03 388.32,243.87 388.75,243.97 389.18,243.85 389.62,244.1 390.05,243.68 390.48,243.91 390.91,244.33 391.34,243.63 391.78,244.45 392.21,244.16 392.64,243.91 393.07,243.54 393.5,244.17 393.94,244.33 394.37,243.86 394.8,243.7 395.23,244.22 395.66,244.01 396.1,243.8 396.53,243.96 396.96,243.64 397.39,244.34 397.82,243.68 398.26,244.46 398.69,244.2 399.12,243.66 399.55,244 399.98,243.59 400.42,243.91 400.85,243.73 401.28,244.3 401.71,244.04 402.14,244.05 402.58,244.24 403.01,244.07 403.44,243.87 403.87,243.59 404.3,243.99 404.73,244.44 405.17,244.15 405.6,244.23 406.03,244.28 406.46,244.09 406.89,244.22 407.33,243.74 407.76,244.09 408.19,243.65 408.62,244.23 409.05,243.54 409.49,244.42 409.92,243.91 409.92,244.05 409.49,244.05 409.05,244.05 408.62,244.05 408.19,244.05 407.76,244.05 407.33,244.05 406.89,244.05 406.46,244.05 406.03,244.05 405.6,244.05 405.17,244.05 404.73,244.05 404.3,244.05 403.87,244.05 403.44,244.05 403.01,244.05 402.58,244.05 402.14,244.05 401.71,244.05 401.28,244.05 400.85,244.05 400.42,244.05 399.98,244.05 399.55,244.05 399.12,244.05 398.69,244.05 398.26,244.05 397.82,244.05 397.39,244.05 396.96,244.05 396.53,244.05 396.1,244.05 395.66,244.05 395.23,244.05 394.8,244.05 394.37,244.05 393.94,244.05 393.5,244.05 393.07,244.05 392.64,244.06 392.21,244.06 391.78,244.06 391.34,244.06 390.91,244.06 390.48,244.06 390.05,244.06 389.62,244.06 389.18,244.06 388.75,244.06 388.32,244.06 387.89,244.06 387.46,244.06 387.03,244.06 386.59,244.06 386.16,244.06 385.73,244.06 385.3,244.06 384.87,244.06 384.43,244.06 384,244.06 383.57,244.07 383.14,244.07 382.71,244.07 382.27,244.07 381.84,244.07 381.41,244.07 380.98,244.07 380.55,244.07 380.11,244.07 379.68,244.07 379.25,244.07 378.82,244.07 378.39,244.07 377.95,244.08 377.52,244.08 377.09,244.08 376.66,244.08 376.23,244.08 375.79,244.08 375.36,244.08 374.93,244.08 374.5,244.08 374.07,244.08 373.64,244.08 373.2,244.09 372.77,244.09 372.34,244.09 371.91,244.09 371.48,244.09 371.04,244.09 370.61,244.09 370.18,244.09 369.75,244.1 369.32,244.1 368.88,244.1 368.45,244.1 368.02,244.1 367.59,244.1 367.16,244.1 366.72,244.11 366.29,244.11 365.86,244.11 365.43,244.11 365,244.11 364.56,244.11 364.13,244.12 363.7,244.12 363.27,244.12 362.84,244.12 362.4,244.12 361.97,244.13 361.54,244.13 361.11,244.13 360.68,244.13 360.24,244.13 359.81,244.14 359.38,244.14 358.95,244.14 358.52,244.14 358.09,244.15 357.65,244.15 357.22,244.15 356.79,244.15 356.36,244.16 355.93,244.16 355.49,244.16 355.06,244.17 354.63,244.17 354.2,244.17 353.77,244.18 353.33,244.18 352.9,244.18 352.47,244.19 352.04,244.19 351.61,244.19 351.17,244.2 350.74,244.2 350.31,244.2 349.88,244.21 349.45,244.21 349.01,244.22 348.58,244.22 348.15,244.23 347.72,244.23 347.29,244.23 346.85,244.24 346.42,244.24 345.99,244.25 345.56,244.25 345.13,244.26 344.7,244.27 344.26,244.27 343.83,244.28 343.4,244.28 342.97,244.29 342.54,244.29 342.1,244.3 341.67,244.31 341.24,244.31 340.81,244.32 340.38,244.33 339.94,244.33 339.51,244.34 339.08,244.35 338.65,244.35 338.22,244.36 337.78,244.37 337.35,244.38 336.92,244.39 336.49,244.39 336.06,244.4 335.62,244.41 335.19,244.42 334.76,244.43 334.33,244.44 333.9,244.45 333.46,244.46 333.03,244.47 332.6,244.48 332.17,244.49 331.74,244.5 331.31,244.51 330.87,244.52 330.44,244.53 330.01,244.55 329.58,244.56 329.15,244.57 328.71,244.58 328.28,244.6 327.85,244.61 327.42,244.62 326.99,244.64 326.55,244.65 326.12,244.66 325.69,244.68 325.26,244.69 324.83,244.71 324.39,244.73 323.96,244.74 323.53,244.76 323.1,244.78 322.67,244.79 322.23,244.81 321.8,244.83 321.37,244.85 320.94,244.87 320.51,244.89 320.07,244.91 319.64,244.93 319.21,244.95 318.78,244.97 318.35,244.99 317.91,245.01 317.48,245.03 317.05,245.06 316.62,245.08 316.19,245.11 315.76,245.13 315.32,245.15 314.89,245.18 314.46,245.21 314.03,245.23 313.6,245.26 313.16,245.29 312.73,245.32 312.3,245.35 311.87,245.38 311.44,245.41 311,245.44 310.57,245.47 310.14,245.5 309.71,245.54 309.28,245.57 308.84,245.61 308.41,245.64 307.98,245.68 307.55,245.71 307.12,245.75 306.68,245.79 306.25,245.83 305.82,245.87 305.39,245.91 304.96,245.95 304.52,246 304.09,246.04 303.66,246.08 303.23,246.13 302.8,246.17 302.37,246.22 301.93,246.27 301.5,246.32 301.07,246.37 300.64,246.42 300.21,246.47 299.77,246.52 299.34,246.58 298.91,246.63 298.48,246.69 298.05,246.75 297.61,246.8 297.18,246.86 296.75,246.92 296.32,246.99 295.89,247.05 295.45,247.11 295.02,247.18 294.59,247.24 294.16,247.31 293.73,247.38 293.29,247.45 292.86,247.52 292.43,247.59 292,247.66 291.57,247.74 291.13,247.82 290.7,247.89 290.27,247.97 289.84,248.05 289.41,248.13 288.97,248.21 288.54,248.3 288.11,248.38 287.68,248.47 287.25,248.56 286.82,248.65 286.38,248.74 285.95,248.83 285.52,248.92 285.09,249.02 284.66,249.11 284.22,249.21 283.79,249.31 283.36,249.41 282.93,249.51 282.5,249.61 282.06,249.72 281.63,249.82 281.2,249.93 280.77,250.04 280.34,250.15 279.9,250.26 279.47,250.37 279.04,250.48 278.61,250.6 278.18,250.71 277.74,250.83 277.31,250.95 276.88,251.07 276.45,251.19 276.02,251.31 275.58,251.44 275.15,251.56 274.72,251.69 274.29,251.82 273.86,251.94 273.43,252.07 272.99,252.2 272.56,252.34 272.13,252.47 271.7,252.6 271.27,252.73 270.83,252.87 270.4,253 269.97,253.14 269.54,253.28 269.11,253.42 268.67,253.55 268.24,253.69 267.81,253.83 267.38,253.97 266.95,254.11 266.51,254.25 266.08,254.39 265.65,254.53 265.22,254.67 264.79,254.81 264.35,254.96 263.92,255.1 263.49,255.24 263.06,255.38 262.63,255.52 262.19,255.66 261.76,255.8 261.33,255.94 260.9,256.07 260.47,256.21 260.04,256.35 259.6,256.49 259.17,256.62 258.74,256.75 258.31,256.89 257.88,257.02 257.44,257.15 257.01,257.28 256.58,257.41 256.15,257.53 255.72,257.66 255.28,257.78 254.85,257.9 254.42,258.02 253.99,258.14 253.56,258.26 253.12,258.37 252.69,258.48 252.26,258.59 251.83,258.7 251.4,258.8 250.96,258.91 250.53,259.01 250.1,259.11 249.67,259.2 249.24,259.29 248.8,259.38 248.37,259.47 247.94,259.56 247.51,259.64 247.08,259.72 246.64,259.8 246.21,259.87 245.78,259.94 245.35,260.01 244.92,260.08 244.49,260.14 244.05,260.2 243.62,260.26 243.19,260.32 242.76,260.37 242.33,260.42 241.89,260.47 241.46,260.51 241.03,260.55 240.6,260.59 240.17,260.63 239.73,260.67 239.3,260.7 238.87,260.73 238.44,260.76 238.01,260.78 237.57,260.81 237.14,260.83 236.71,260.85 236.28,260.87 235.85,260.89 235.41,260.9 234.98,260.92 234.55,260.93 234.12,260.94 233.69,260.95 233.25,260.96 232.82,260.97 232.39,260.97 231.96,260.98 231.53,260.98 231.1,260.99 230.66,260.99 230.23,260.99 229.8,260.99 229.37,261 228.94,261 228.5,261 228.07,261 227.64,261 227.21,261 226.78,261 226.34,261 225.91,261 225.48,261 225.05,261 224.62,261 224.18,261 223.75,261 223.32,261 222.89,261 222.46,261 222.02,261 221.59,261 221.16,261 220.73,261 220.3,261 219.86,261 219.43,261 219,260.99 218.57,260.99 218.14,260.99 217.7,260.99 217.27,260.98 216.84,260.98 216.41,260.97 215.98,260.97 215.55,260.96 215.11,260.95 214.68,260.94 214.25,260.93 213.82,260.92 213.39,260.9 212.95,260.89 212.52,260.87 212.09,260.85 211.66,260.83 211.23,260.81 210.79,260.78 210.36,260.76 209.93,260.73 209.5,260.7 209.07,260.67 208.63,260.63 208.2,260.59 207.77,260.55 207.34,260.51 206.91,260.47 206.47,260.42 206.04,260.37 205.61,260.32 205.18,260.26 204.75,260.2 204.31,260.14 203.88,260.08 203.45,260.01 203.02,259.94 202.59,259.87 202.16,259.8 201.72,259.72 201.29,259.64 200.86,259.56 200.43,259.47 200,259.38 199.56,259.29 199.13,259.2 198.7,259.11 198.27,259.01 197.84,258.91 197.4,258.8 196.97,258.7 196.54,258.59 196.11,258.48 195.68,258.37 195.24,258.26 194.81,258.14 194.38,258.02 193.95,257.9 193.52,257.78 193.08,257.66 192.65,257.53 192.22,257.41 191.79,257.28 191.36,257.15 190.92,257.02 190.49,256.89 190.06,256.75 189.63,256.62 189.2,256.49 188.76,256.35 188.33,256.21 187.9,256.07 187.47,255.94 187.04,255.8 186.61,255.66 186.17,255.52 185.74,255.38 185.31,255.24 184.88,255.1 184.45,254.96 184.01,254.81 183.58,254.67 183.15,254.53 182.72,254.39 182.29,254.25 181.85,254.11 181.42,253.97 180.99,253.83 180.56,253.69 180.13,253.55 179.69,253.42 179.26,253.28 178.83,253.14 178.4,253 177.97,252.87 177.53,252.73 177.1,252.6 176.67,252.47 176.24,252.34 175.81,252.2 175.37,252.07 174.94,251.94 174.51,251.82 174.08,251.69 173.65,251.56 173.22,251.44 172.78,251.31 172.35,251.19 171.92,251.07 171.49,250.95 171.06,250.83 170.62,250.71 170.19,250.6 169.76,250.48 169.33,250.37 168.9,250.26 168.46,250.15 168.03,250.04 167.6,249.93 167.17,249.82 166.74,249.72 166.3,249.61 165.87,249.51 165.44,249.41 165.01,249.31 164.58,249.21 164.14,249.11 163.71,249.02 163.28,248.92 162.85,248.83 162.42,248.74 161.98,248.65 161.55,248.56 161.12,248.47 160.69,248.38 160.26,248.3 159.83,248.21 159.39,248.13 158.96,248.05 158.53,247.97 158.1,247.89 157.67,247.82 157.23,247.74 156.8,247.66 156.37,247.59 155.94,247.52 155.51,247.45 155.07,247.38 154.64,247.31 154.21,247.24 153.78,247.18 153.35,247.11 152.91,247.05 152.48,246.99 152.05,246.92 151.62,246.86 151.19,246.8 150.75,246.75 150.32,246.69 149.89,246.63 149.46,246.58 149.03,246.52 148.59,246.47 148.16,246.42 147.73,246.37 147.3,246.32 146.87,246.27 146.43,246.22 146,246.17 145.57,246.13 145.14,246.08 144.71,246.04 144.28,246 143.84,245.95 143.41,245.91 142.98,245.87 142.55,245.83 142.12,245.79 141.68,245.75 141.25,245.71 140.82,245.68 140.39,245.64 139.96,245.61 139.52,245.57 139.09,245.54 138.66,245.5 138.23,245.47 137.8,245.44 137.36,245.41 136.93,245.38 136.5,245.35 136.07,245.32 135.64,245.29 135.2,245.26 134.77,245.23 134.34,245.21 133.91,245.18 133.48,245.15 133.04,245.13 132.61,245.11 132.18,245.08 131.75,245.06 131.32,245.03 130.89,245.01 130.45,244.99 130.02,244.97 129.59,244.95 129.16,244.93 128.73,244.91 128.29,244.89 127.86,244.87 127.43,244.85 127,244.83 126.57,244.81 126.13,244.79 125.7,244.78 125.27,244.76 124.84,244.74 124.41,244.73 123.97,244.71 123.54,244.69 123.11,244.68 122.68,244.66 122.25,244.65 121.81,244.64 121.38,244.62 120.95,244.61 120.52,244.6 120.09,244.58 119.65,244.57 119.22,244.56 118.79,244.55 118.36,244.53 117.93,244.52 117.49,244.51 117.06,244.5 116.63,244.49 116.2,244.48 115.77,244.47 115.34,244.46 114.9,244.45 114.47,244.44 114.04,244.43 113.61,244.42 113.18,244.41 112.74,244.4 112.31,244.39 111.88,244.39 111.45,244.38 111.02,244.37 110.58,244.36 110.15,244.35 109.72,244.35 109.29,244.34 108.86,244.33 108.42,244.33 107.99,244.32 107.56,244.31 107.13,244.31 106.7,244.3 106.26,244.29 105.83,244.29 105.4,244.28 104.97,244.28 104.54,244.27 104.1,244.27 103.67,244.26 103.24,244.25 102.81,244.25 102.38,244.24 101.95,244.24 101.51,244.23 101.08,244.23 100.65,244.23 100.22,244.22 99.79,244.22 99.35,244.21 98.92,244.21 98.49,244.2 98.06,244.2 97.63,244.2 97.19,244.19 96.76,244.19 96.33,244.19 95.9,244.18 95.47,244.18 95.03,244.18 94.6,244.17 94.17,244.17 93.74,244.17 93.31,244.16 92.87,244.16 92.44,244.16 92.01,244.15 91.58,244.15 91.15,244.15 90.71,244.15 90.28,244.14 89.85,244.14 89.42,244.14 88.99,244.14 88.56,244.13 88.12,244.13 87.69,244.13 87.26,244.13 86.83,244.13 86.4,244.12 85.96,244.12 85.53,244.12 85.1,244.12 84.67,244.12 84.24,244.11 83.8,244.11 83.37,244.11 82.94,244.11 82.51,244.11 82.08,244.11 81.64,244.1 81.21,244.1 80.78,244.1 80.35,244.1 79.92,244.1 79.48,244.1 79.05,244.1 78.62,244.09 78.19,244.09 77.76,244.09 77.32,244.09 76.89,244.09 76.46,244.09 76.03,244.09 75.6,244.09 75.16,244.08 74.73,244.08 74.3,244.08 73.87,244.08 73.44,244.08 73.01,244.08 72.57,244.08 72.14,244.08 71.71,244.08 71.28,244.08 70.85,244.08 70.41,244.07 69.98,244.07 69.55,244.07 69.12,244.07 68.69,244.07 68.25,244.07 67.82,244.07 67.39,244.07 66.96,244.07 66.53,244.07 66.09,244.07 65.66,244.07 65.23,244.07 64.8,244.06 64.37,244.06 63.93,244.06 63.5,244.06 63.07,244.06 62.64,244.06 62.21,244.06 61.77,244.06 61.34,244.06 60.91,244.06 60.48,244.06 60.05,244.06 59.62,244.06 59.18,244.06 58.75,244.06 58.32,244.06 57.89,244.06 57.46,244.06 57.02,244.06 56.59,244.06 56.16,244.06 55.73,244.05 55.3,244.05 54.86,244.05 54.43,244.05 54,244.05 53.57,244.05 53.14,244.05 52.7,244.05 52.27,244.05 51.84,244.05 51.41,244.05 50.98,244.05 50.54,244.05 50.11,244.05 49.68,244.05 49.25,244.05 48.82,244.05 48.38,244.05 47.95,244.05 47.52,244.05 47.09,244.05 46.66,244.05 46.22,244.05 45.79,244.05 45.36,244.05 44.93,244.05 44.5,244.05 44.07,244.05 43.63,244.05 43.2,244.05 42.77,244.05 42.34,244.05 41.91,244.05 41.47,244.05 41.04,244.05 40.61,244.05 40.18,244.05 39.75,244.05 39.31,244.05 38.88,244.05" fill="#0000ff" stroke="#0000ff" stroke-width="0.5"/>
<line x1="38.88" y1="244.04" x2="409.92" y2="244.04" stroke="#0000f0" stroke-width="1.5"/>
<path d="M34 264.5 V121 H414.5" fill="none" stroke="#ffffff" stroke-width="1"/><path d="M35 122.6 H414.0 V264.5" fill="none" stroke="#767676" stroke-width="1.3"/><path d="M414.0 124 V264.5" fill="none" stroke="#3a3a3a" stroke-width="1.1"/><path d="M35.75 122 V263.75 H414.5" fill="none" stroke="#000" stroke-width="1.6"/>
<rect x="208.7" y="174" width="28.8" height="8.2" fill="#fff"/>
<text x="223.1" y="180.9" font-family="Liberation Sans" font-size="7" fill="#222" stroke="#222" stroke-width="0.22" text-anchor="middle">237,28 fs</text>
<line x1="200" y1="184.3" x2="248" y2="184.3" stroke="#e01010" stroke-width="1"/>
<path d="M197.5 184.3 l4.5 -2 v4z M250.5 184.3 l-4.5 -2 v4z" fill="#e01010"/>
<text x="154.26" y="116.9" font-family="Liberation Sans" font-size="8.2" font-weight="bold" fill="#111" text-anchor="start" textLength="122.83" lengthAdjust="spacingAndGlyphs">Interferometric Autocorrelation</text>
<text x="207.68" y="283.1" font-family="Liberation Sans" font-size="7" font-weight="bold" fill="#111" text-anchor="start" textLength="32.49" lengthAdjust="spacingAndGlyphs">Delay (fs)</text>
<g transform="translate(24.6,208) rotate(-90)"><text x="-0.42" y="0" font-family="Liberation Sans" font-size="7" font-weight="bold" fill="#111" text-anchor="start" textLength="31.34" lengthAdjust="spacingAndGlyphs">IAC (a.u.)</text></g>
<rect x="454" y="128.5" width="331.5" height="135.5" fill="#fff"/>
<line x1="468.5" y1="128.5" x2="468.5" y2="264" stroke="#9a9a9a" stroke-width="1" stroke-dasharray="1.6,2.15"/>
<text x="468.5" y="274.5" font-family="Liberation Sans" font-size="7" fill="#000" stroke="#000" stroke-width="0.22" text-anchor="middle">-800</text>
<line x1="468.5" y1="264" x2="468.5" y2="266.5" stroke="#808080" stroke-width="1"/>
<line x1="506.5" y1="128.5" x2="506.5" y2="264" stroke="#9a9a9a" stroke-width="1" stroke-dasharray="1.6,2.15"/>
<text x="506.5" y="274.5" font-family="Liberation Sans" font-size="7" fill="#000" stroke="#000" stroke-width="0.22" text-anchor="middle">-600</text>
<line x1="506.5" y1="264" x2="506.5" y2="266.5" stroke="#808080" stroke-width="1"/>
<line x1="543.5" y1="128.5" x2="543.5" y2="264" stroke="#9a9a9a" stroke-width="1" stroke-dasharray="1.6,2.15"/>
<text x="543.5" y="274.5" font-family="Liberation Sans" font-size="7" fill="#000" stroke="#000" stroke-width="0.22" text-anchor="middle">-400</text>
<line x1="543.5" y1="264" x2="543.5" y2="266.5" stroke="#808080" stroke-width="1"/>
<line x1="581.5" y1="128.5" x2="581.5" y2="264" stroke="#9a9a9a" stroke-width="1" stroke-dasharray="1.6,2.15"/>
<text x="581.5" y="274.5" font-family="Liberation Sans" font-size="7" fill="#000" stroke="#000" stroke-width="0.22" text-anchor="middle">-200</text>
<line x1="581.5" y1="264" x2="581.5" y2="266.5" stroke="#808080" stroke-width="1"/>
<line x1="619.5" y1="128.5" x2="619.5" y2="264" stroke="#9a9a9a" stroke-width="1" stroke-dasharray="1.6,2.15"/>
<text x="619.5" y="274.5" font-family="Liberation Sans" font-size="7" fill="#000" stroke="#000" stroke-width="0.22" text-anchor="middle">0</text>
<line x1="619.5" y1="264" x2="619.5" y2="266.5" stroke="#808080" stroke-width="1"/>
<line x1="657.5" y1="128.5" x2="657.5" y2="264" stroke="#9a9a9a" stroke-width="1" stroke-dasharray="1.6,2.15"/>
<text x="657.5" y="274.5" font-family="Liberation Sans" font-size="7" fill="#000" stroke="#000" stroke-width="0.22" text-anchor="middle">200</text>
<line x1="657.5" y1="264" x2="657.5" y2="266.5" stroke="#808080" stroke-width="1"/>
<line x1="695.5" y1="128.5" x2="695.5" y2="264" stroke="#9a9a9a" stroke-width="1" stroke-dasharray="1.6,2.15"/>
<text x="695.5" y="274.5" font-family="Liberation Sans" font-size="7" fill="#000" stroke="#000" stroke-width="0.22" text-anchor="middle">400</text>
<line x1="695.5" y1="264" x2="695.5" y2="266.5" stroke="#808080" stroke-width="1"/>
<line x1="732.5" y1="128.5" x2="732.5" y2="264" stroke="#9a9a9a" stroke-width="1" stroke-dasharray="1.6,2.15"/>
<text x="732.5" y="274.5" font-family="Liberation Sans" font-size="7" fill="#000" stroke="#000" stroke-width="0.22" text-anchor="middle">600</text>
<line x1="732.5" y1="264" x2="732.5" y2="266.5" stroke="#808080" stroke-width="1"/>
<line x1="770.5" y1="128.5" x2="770.5" y2="264" stroke="#9a9a9a" stroke-width="1" stroke-dasharray="1.6,2.15"/>
<text x="770.5" y="274.5" font-family="Liberation Sans" font-size="7" fill="#000" stroke="#000" stroke-width="0.22" text-anchor="middle">800</text>
<line x1="770.5" y1="264" x2="770.5" y2="266.5" stroke="#808080" stroke-width="1"/>
<text x="451" y="263.2" font-family="Liberation Sans" font-size="7" fill="#000" stroke="#000" stroke-width="0.22" text-anchor="end">0</text>
<line x1="451.5" y1="261.5" x2="454" y2="261.5" stroke="#808080" stroke-width="1"/>
<text x="451" y="250.26" font-family="Liberation Sans" font-size="7" fill="#000" stroke="#000" stroke-width="0.22" text-anchor="end">0,1</text>
<line x1="451.5" y1="248.5" x2="454" y2="248.5" stroke="#808080" stroke-width="1"/>
<text x="451" y="237.32" font-family="Liberation Sans" font-size="7" fill="#000" stroke="#000" stroke-width="0.22" text-anchor="end">0,2</text>
<line x1="451.5" y1="235.5" x2="454" y2="235.5" stroke="#808080" stroke-width="1"/>
<text x="451" y="224.38" font-family="Liberation Sans" font-size="7" fill="#000" stroke="#000" stroke-width="0.22" text-anchor="end">0,3</text>
<line x1="451.5" y1="222.5" x2="454" y2="222.5" stroke="#808080" stroke-width="1"/>
<text x="451" y="211.44" font-family="Liberation Sans" font-size="7" fill="#000" stroke="#000" stroke-width="0.22" text-anchor="end">0,4</text>
<line x1="451.5" y1="209.5" x2="454" y2="209.5" stroke="#808080" stroke-width="1"/>
<text x="451" y="198.5" font-family="Liberation Sans" font-size="7" fill="#000" stroke="#000" stroke-width="0.22" text-anchor="end">0,5</text>
<line x1="451.5" y1="196.5" x2="454" y2="196.5" stroke="#808080" stroke-width="1"/>
<text x="451" y="185.56" font-family="Liberation Sans" font-size="7" fill="#000" stroke="#000" stroke-width="0.22" text-anchor="end">0,6</text>
<line x1="451.5" y1="183.5" x2="454" y2="183.5" stroke="#808080" stroke-width="1"/>
<text x="451" y="172.62" font-family="Liberation Sans" font-size="7" fill="#000" stroke="#000" stroke-width="0.22" text-anchor="end">0,7</text>
<line x1="451.5" y1="170.5" x2="454" y2="170.5" stroke="#808080" stroke-width="1"/>
<text x="451" y="159.68" font-family="Liberation Sans" font-size="7" fill="#000" stroke="#000" stroke-width="0.22" text-anchor="end">0,8</text>
<line x1="451.5" y1="157.5" x2="454" y2="157.5" stroke="#808080" stroke-width="1"/>
<text x="451" y="146.74" font-family="Liberation Sans" font-size="7" fill="#000" stroke="#000" stroke-width="0.22" text-anchor="end">0,9</text>
<line x1="451.5" y1="144.5" x2="454" y2="144.5" stroke="#808080" stroke-width="1"/>
<text x="451" y="133.8" font-family="Liberation Sans" font-size="7" fill="#000" stroke="#000" stroke-width="0.22" text-anchor="end">1</text>
<line x1="451.5" y1="131.5" x2="454" y2="131.5" stroke="#808080" stroke-width="1"/>
<polyline points="458.81,261.44 459.28,261.26 459.75,261.33 460.23,261.35 460.7,261.27 461.17,261.1 461.64,261.14 462.12,261.37 462.59,261.37 463.06,261.35 463.53,261.36 464.01,261.56 464.48,261.59 464.95,261.44 465.42,261.36 465.9,261.44 466.37,261.38 466.84,261.19 467.31,261.07 467.79,261.09 468.26,261.13 468.73,261.03 469.21,261.08 469.68,261.16 470.15,261.46 470.62,261.55 471.1,261.45 471.57,261.41 472.04,261.49 472.51,261.5 472.99,261.51 473.46,261.7 473.93,262.13 474.4,262.22 474.88,261.97 475.35,261.74 475.82,261.65 476.29,261.37 476.77,260.83 477.24,260.83 477.71,261.3 478.19,261.34 478.66,261.24 479.13,261.37 479.6,261.31 480.08,261.21 480.55,260.84 481.02,260.82 481.49,260.79 481.97,260.86 482.44,260.98 482.91,261.03 483.38,261.04 483.86,261.19 484.33,261.27 484.8,261.13 485.27,261.27 485.75,261.3 486.22,261.4 486.69,261.4 487.16,261.27 487.64,261.43 488.11,261.3 488.58,261.46 489.06,261.16 489.53,261.3 490,261.33 490.47,260.99 490.95,261.09 491.42,261.07 491.89,261.54 492.36,261.4 492.84,261.33 493.31,261.4 493.78,261.33 494.25,261.22 494.73,260.97 495.2,260.82 495.67,260.97 496.14,260.61 496.62,260.7 497.09,260.47 497.56,260.28 498.04,260.35 498.51,260.2 498.98,260.56 499.45,260.33 499.93,260.83 500.4,261.01 500.87,261.18 501.34,261.3 501.82,261.38 502.29,261.52 502.76,261.11 503.23,261.24 503.71,261.04 504.18,261.21 504.65,261.35 505.12,261.53 505.6,261.57 506.07,261.56 506.54,261.63 507.02,261.46 507.49,261.16 507.96,260.9 508.43,260.98 508.91,261.12 509.38,261.34 509.85,261.43 510.32,261.43 510.8,261.42 511.27,261.51 511.74,261.04 512.21,260.92 512.69,261 513.16,261.01 513.63,260.93 514.1,260.75 514.58,261.1 515.05,260.9 515.52,260.66 516,260.79 516.47,260.89 516.94,260.84 517.41,260.77 517.89,261.05 518.36,260.88 518.83,261.15 519.3,261.16 519.78,261.15 520.25,261.01 520.72,260.91 521.19,260.96 521.67,260.56 522.14,260.72 522.61,260.73 523.08,260.74 523.56,260.84 524.03,260.97 524.5,260.86 524.98,260.57 525.45,260.66 525.92,260.6 526.39,260.36 526.87,260.04 527.34,260.08 527.81,260.51 528.28,260.43 528.76,260.33 529.23,260.15 529.7,260.39 530.17,260.68 530.65,260.31 531.12,260.33 531.59,260.49 532.06,260.83 532.54,260.63 533.01,260.37 533.48,260.32 533.95,260.35 534.43,260.55 534.9,260.53 535.37,260.54 535.85,260.82 536.32,260.77 536.79,260.37 537.26,260.21 537.74,260.03 538.21,259.94 538.68,259.56 539.15,259.69 539.63,259.91 540.1,259.78 540.57,259.76 541.04,259.78 541.52,259.82 541.99,259.53 542.46,259.7 542.93,259.52 543.41,259.34 543.88,259.4 544.35,259.34 544.83,259.35 545.3,259.05 545.77,259.19 546.24,259.21 546.72,259.24 547.19,259.42 547.66,259.29 548.13,259.25 548.61,259.2 549.08,259.15 549.55,259.1 550.02,259.05 550.5,258.99 550.97,258.94 551.44,258.88 551.91,258.83 552.39,258.77 552.86,258.71 553.33,258.65 553.81,258.58 554.28,258.52 554.75,258.45 555.22,258.38 555.7,258.31 556.17,258.24 556.64,258.17 557.11,258.09 557.59,258.01 558.06,257.93 558.53,257.85 559,257.76 559.48,257.67 559.95,257.58 560.42,257.49 560.89,257.39 561.37,257.29 561.84,257.18 562.31,257.07 562.78,256.96 563.26,256.84 563.73,256.71 564.2,256.58 564.68,256.45 565.15,256.31 565.62,256.16 566.09,256.01 566.57,255.85 567.04,255.68 567.51,255.51 567.98,255.32 568.46,255.13 568.93,254.93 569.4,254.71 569.87,254.49 570.35,254.25 570.82,254.01 571.29,253.74 571.76,253.47 572.24,253.18 572.71,252.88 573.18,252.55 573.66,252.22 574.13,251.86 574.6,251.48 575.07,251.09 575.55,250.67 576.02,250.23 576.49,249.77 576.96,249.28 577.44,248.77 577.91,248.24 578.38,247.67 578.85,247.08 579.33,246.45 579.8,245.8 580.27,245.11 580.74,244.39 581.22,243.64 581.69,242.85 582.16,242.02 582.64,241.16 583.11,240.26 583.58,239.32 584.05,238.34 584.53,237.32 585,236.25 585.47,235.15 585.94,234 586.42,232.81 586.89,231.58 587.36,230.3 587.83,228.97 588.31,227.61 588.78,226.2 589.25,224.74 589.72,223.24 590.2,221.7 590.67,220.11 591.14,218.49 591.62,216.82 592.09,215.11 592.56,213.36 593.03,211.57 593.51,209.75 593.98,207.89 594.45,206 594.92,204.08 595.4,202.13 595.87,200.15 596.34,198.15 596.81,196.12 597.29,194.07 597.76,192.01 598.23,189.93 598.7,187.85 599.18,185.75 599.65,183.65 600.12,181.55 600.6,179.45 601.07,177.35 601.54,175.26 602.01,173.19 602.49,171.13 602.96,169.09 603.43,167.07 603.9,165.08 604.38,163.12 604.85,161.19 605.32,159.3 605.79,157.46 606.27,155.65 606.74,153.89 607.21,152.19 607.68,150.54 608.16,148.94 608.63,147.41 609.1,145.93 609.57,144.53 610.05,143.19 610.52,141.92 610.99,140.72 611.47,139.59 611.94,138.55 612.41,137.58 612.88,136.68 613.36,135.87 613.83,135.13 614.3,134.48 614.77,133.9 615.25,133.4 615.72,132.98 616.19,132.64 616.66,132.37 617.14,132.18 617.61,132.06 618.08,132 618.55,131.99 619.03,132.04 619.5,132.15 619.97,132.33 620.45,132.58 620.92,132.91 621.39,133.31 621.86,133.79 622.34,134.35 622.81,134.99 623.28,135.71 623.75,136.51 624.23,137.39 624.7,138.35 625.17,139.38 625.64,140.49 626.12,141.67 626.59,142.93 627.06,144.25 627.53,145.65 628.01,147.11 628.48,148.63 628.95,150.21 629.43,151.85 629.9,153.55 630.37,155.3 630.84,157.09 631.32,158.93 631.79,160.81 632.26,162.73 632.73,164.69 633.21,166.67 633.68,168.68 634.15,170.72 634.62,172.77 635.1,174.85 635.57,176.93 636.04,179.03 636.51,181.13 636.99,183.23 637.46,185.33 637.93,187.43 638.4,189.52 638.88,191.6 639.35,193.66 639.82,195.71 640.3,197.74 640.77,199.75 641.24,201.73 641.71,203.69 642.19,205.62 642.66,207.52 643.13,209.38 643.6,211.21 644.08,213.01 644.55,214.76 645.02,216.48 645.49,218.16 645.97,219.79 646.44,221.39 646.91,222.94 647.38,224.45 647.86,225.91 648.33,227.33 648.8,228.7 649.28,230.04 649.75,231.32 650.22,232.57 650.69,233.77 651.17,234.92 651.64,236.04 652.11,237.11 652.58,238.14 653.06,239.12 653.53,240.07 654,240.98 654.47,241.85 654.95,242.69 655.42,243.48 655.89,244.24 656.36,244.97 656.84,245.66 657.31,246.32 657.78,246.95 658.26,247.55 658.73,248.12 659.2,248.67 659.67,249.18 660.15,249.68 660.62,250.14 661.09,250.59 661.56,251.01 662.04,251.41 662.51,251.79 662.98,252.15 663.45,252.49 663.93,252.81 664.4,253.12 664.87,253.41 665.34,253.69 665.82,253.95 666.29,254.2 666.76,254.44 667.24,254.67 667.71,254.88 668.18,255.09 668.65,255.28 669.13,255.47 669.6,255.65 670.07,255.82 670.54,255.98 671.02,256.13 671.49,256.28 671.96,256.42 672.43,256.56 672.91,256.69 673.38,256.81 673.85,256.93 674.32,257.05 674.8,257.16 675.27,257.26 675.74,257.37 676.22,257.47 676.69,257.56 677.16,257.66 677.63,257.74 678.11,257.83 678.58,257.92 679.05,258 679.52,258.08 680,258.15 680.47,258.23 680.94,258.3 681.41,258.37 681.89,258.44 682.36,258.5 682.83,258.57 683.3,258.63 683.78,258.69 684.25,258.76 684.72,258.81 685.19,258.87 685.67,258.93 686.14,258.98 686.61,259.03 687.09,259.09 687.56,259.14 688.03,259.19 688.5,259.24 688.98,259.28 689.45,259.33 689.92,259.38 690.39,259.42 690.87,259.46 691.34,259.51 691.81,259.88 692.28,259.78 692.76,259.86 693.23,259.43 693.7,259.7 694.17,259.71 694.65,259.89 695.12,260.07 695.59,259.82 696.07,260.27 696.54,260.09 697.01,260.14 697.48,260 697.96,259.96 698.43,260.04 698.9,259.81 699.37,259.82 699.85,259.74 700.32,259.71 700.79,259.79 701.26,260.08 701.74,260.07 702.21,260.18 702.68,260.11 703.15,260.3 703.63,260.46 704.1,260.18 704.57,260.4 705.05,260.57 705.52,260.66 705.99,260.79 706.46,260.49 706.94,260.78 707.41,260.65 707.88,260.45 708.35,260.86 708.83,260.69 709.3,260.93 709.77,260.81 710.24,260.81 710.72,260.66 711.19,260.47 711.66,260.5 712.13,260.18 712.61,260.12 713.08,260.11 713.55,260.52 714.02,260.69 714.5,260.76 714.97,261.08 715.44,261.12 715.92,260.88 716.39,260.86 716.86,260.74 717.33,260.6 717.81,260.56 718.28,260.49 718.75,260.89 719.22,260.86 719.7,260.55 720.17,260.58 720.64,260.78 721.11,260.98 721.59,260.97 722.06,261.05 722.53,261.23 723,261.28 723.48,261.19 723.95,261.24 724.42,261.03 724.9,260.85 725.37,261.06 725.84,261.36 726.31,261.46 726.79,261.29 727.26,261.32 727.73,261.47 728.2,261.65 728.68,261.38 729.15,261.26 729.62,261.25 730.09,261.54 730.57,261.38 731.04,261.37 731.51,261.54 731.98,261.61 732.46,261.78 732.93,261.63 733.4,261.49 733.88,261.44 734.35,261.07 734.82,261.1 735.29,261.1 735.77,261.03 736.24,261.5 736.71,261.51 737.18,261.84 737.66,261.74 738.13,261.55 738.6,261.56 739.07,261.37 739.55,261.09 740.02,261.04 740.49,260.86 740.96,261.04 741.44,261.04 741.91,261.06 742.38,261.06 742.86,261.19 743.33,261.37 743.8,261.55 744.27,261.71 744.75,261.68 745.22,261.91 745.69,261.7 746.16,261.62 746.64,261.39 747.11,261.34 747.58,261.14 748.05,260.86 748.53,260.76 749,260.81 749.47,260.57 749.94,260.68 750.42,260.67 750.89,260.98 751.36,260.8 751.84,260.89 752.31,261.13 752.78,260.89 753.25,261.02 753.73,260.98 754.2,261.54 754.67,261.54 755.14,261.3 755.62,261.46 756.09,261.21 756.56,261 757.03,260.82 757.51,260.97 757.98,261.26 758.45,261.2 758.92,261.46 759.4,261.55 759.87,261.42 760.34,261.28 760.81,261.45 761.29,261.57 761.76,261.47 762.23,261.61 762.71,261.82 763.18,261.91 763.65,261.75 764.12,261.73 764.6,261.81 765.07,261.87 765.54,261.74 766.01,261.69 766.49,261.78 766.96,262.01 767.43,262.15 767.9,262.07 768.38,262.05 768.85,261.92 769.32,261.8 769.79,261.53 770.27,261.53 770.74,261.35 771.21,261.27 771.69,261.23 772.16,261.3 772.63,261.34 773.1,261.25 773.58,261.53 774.05,261.68 774.52,261.97 774.99,262.13 775.47,262.05 775.94,261.92 776.41,261.64 776.88,261.65 777.36,261.45 777.83,261.15 778.3,261.27 778.77,261.6 779.25,261.42 779.72,261.36 780.19,261.35" fill="none" stroke="#4c4cff" stroke-width="1.05"/>
<path d="M453 264 V127.5 H785.5" fill="none" stroke="#ffffff" stroke-width="1"/><path d="M454 129.1 H785.0 V264" fill="none" stroke="#767676" stroke-width="1.3"/><path d="M785.0 130.5 V264" fill="none" stroke="#3a3a3a" stroke-width="1.1"/><path d="M454.75 128.5 V263.25 H785.5" fill="none" stroke="#000" stroke-width="1.6"/>
<text x="618.5" y="193" font-family="Liberation Sans" font-size="7" fill="#222" stroke="#222" stroke-width="0.22" text-anchor="middle">221,09 fs</text>
<line x1="599" y1="196.7" x2="637" y2="196.7" stroke="#ff2020" stroke-width="1"/>
<path d="M596.7 196.7 l4.5 -2 v4z M639.5 196.7 l-4.5 -2 v4z" fill="#ff2020"/>
<text x="563.51" y="124" font-family="Liberation Sans" font-size="8.2" font-weight="bold" fill="#111" text-anchor="start" textLength="97.38" lengthAdjust="spacingAndGlyphs">Intensity Autocorrelation</text>
<text x="602.58" y="282.5" font-family="Liberation Sans" font-size="7" font-weight="bold" fill="#111" text-anchor="start" textLength="31.59" lengthAdjust="spacingAndGlyphs">Delay (fs)</text>
<defs><linearGradient id="bot1" x1="0" y1="0" x2="0" y2="1"><stop offset="0" stop-color="#f0f0f0" stop-opacity="0"/><stop offset="1" stop-color="#d8d8d8" stop-opacity="1"/></linearGradient></defs>
<rect x="4" y="280" width="791.5" height="10" fill="url(#bot1)"/>
<rect x="0" y="290" width="800" height="250" fill="#ffffff"/>
<rect x="2.2" y="290.4" width="795.8" height="246.8" fill="#ffffff" stroke="#8db5e8" stroke-width="1.3"/>
<g transform="translate(8,295)"><rect x="1.0" y="1.5" width="1.7" height="8" fill="#6020a0"/><rect x="2.6" y="1" width="1.7" height="8" fill="#2040e0"/><rect x="4.2" y="1.5" width="1.7" height="8" fill="#20a040"/><rect x="5.8" y="1" width="1.7" height="8" fill="#e0c000"/><rect x="7.4" y="1.5" width="1.7" height="8" fill="#e02020"/><path d="M0.5 1 L9.5 1.5 V9.5 L0.5 9" fill="none" stroke="#202020" stroke-width="0.8"/></g>
<text x="20.28" y="302.9" font-family="Liberation Sans" font-size="8.7" fill="#000" stroke="#000" stroke-width="0.1" text-anchor="start" textLength="102.24" lengthAdjust="spacingAndGlyphs">ReSpect - 8A_8_1nm_143fs.RSD</text>
<line x1="722.5" y1="299.5" x2="730.5" y2="299.5" stroke="#1a1a1a" stroke-width="1"/>
<rect x="750.5" y="296.5" width="7" height="7" fill="none" stroke="#1a1a1a" stroke-width="1"/>
<path d="M779.5 296 L787 303.5 M787 296 L779.5 303.5" stroke="#1a1a1a" stroke-width="1"/>
<rect x="2.9" y="309" width="794.4" height="227.4" fill="#f0f0f0"/>
<text x="6.07" y="318.1" font-family="Liberation Sans" font-size="8.9" fill="#000" stroke="#000" stroke-width="0.1" text-anchor="start" textLength="12.27" lengthAdjust="spacingAndGlyphs">File</text>
<line x1="6.3" y1="319.6" x2="9.4" y2="319.6" stroke="#000" stroke-width="0.8"/>
<text x="25.77" y="318.1" font-family="Liberation Sans" font-size="8.9" fill="#000" stroke="#000" stroke-width="0.1" text-anchor="start" textLength="13.27" lengthAdjust="spacingAndGlyphs">Edit</text>
<line x1="26" y1="319.6" x2="29.35" y2="319.6" stroke="#000" stroke-width="0.8"/>
<text x="46.37" y="318.1" font-family="Liberation Sans" font-size="8.9" fill="#000" stroke="#000" stroke-width="0.1" text-anchor="start" textLength="17.07" lengthAdjust="spacingAndGlyphs">View</text>
<line x1="46.6" y1="319.6" x2="50.9" y2="319.6" stroke="#000" stroke-width="0.8"/>
<text x="71.37" y="318.1" font-family="Liberation Sans" font-size="8.9" fill="#000" stroke="#000" stroke-width="0.1" text-anchor="start" textLength="18.87" lengthAdjust="spacingAndGlyphs">Chart</text>
<line x1="75.16" y1="319.6" x2="79.02" y2="319.6" stroke="#000" stroke-width="0.8"/>
<text x="97.97" y="318.1" font-family="Liberation Sans" font-size="8.9" fill="#000" stroke="#000" stroke-width="0.1" text-anchor="start" textLength="38.57" lengthAdjust="spacingAndGlyphs">Acquisition</text>
<line x1="98.2" y1="319.6" x2="101.91" y2="319.6" stroke="#000" stroke-width="0.8"/>
<text x="144.77" y="318.1" font-family="Liberation Sans" font-size="8.9" fill="#000" stroke="#000" stroke-width="0.1" text-anchor="start" textLength="28.07" lengthAdjust="spacingAndGlyphs">Baseline</text>
<line x1="145" y1="319.6" x2="148.68" y2="319.6" stroke="#000" stroke-width="0.8"/>
<text x="180.27" y="318.1" font-family="Liberation Sans" font-size="8.9" fill="#000" stroke="#000" stroke-width="0.1" text-anchor="start" textLength="27.17" lengthAdjust="spacingAndGlyphs">Settings</text>
<line x1="180.5" y1="319.6" x2="184.06" y2="319.6" stroke="#000" stroke-width="0.8"/>
<text x="215.27" y="318.1" font-family="Liberation Sans" font-size="8.9" fill="#000" stroke="#000" stroke-width="0.1" text-anchor="start" textLength="29.27" lengthAdjust="spacingAndGlyphs">Measure</text>
<line x1="231.61" y1="319.6" x2="235.94" y2="319.6" stroke="#000" stroke-width="0.8"/>
<text x="251.97" y="318.1" font-family="Liberation Sans" font-size="8.9" fill="#000" stroke="#000" stroke-width="0.1" text-anchor="start" textLength="26.97" lengthAdjust="spacingAndGlyphs">Options</text>
<line x1="252.2" y1="319.6" x2="256.2" y2="319.6" stroke="#000" stroke-width="0.8"/>
<text x="287.07" y="318.1" font-family="Liberation Sans" font-size="8.9" fill="#000" stroke="#000" stroke-width="0.1" text-anchor="start" textLength="16.47" lengthAdjust="spacingAndGlyphs">Help</text>
<line x1="287.3" y1="319.6" x2="291.45" y2="319.6" stroke="#000" stroke-width="0.8"/>
<rect x="2.5" y="323.5" width="793" height="16" fill="#f0f0f0" stroke="#cacaca" stroke-width="1"/>
<line x1="2.5" y1="339.5" x2="795.5" y2="339.5" stroke="#a8a8a8" stroke-width="1"/>
<rect x="6" y="325" width="3" height="12" fill="#d4d4d4"/><line x1="6.5" y1="325" x2="6.5" y2="337" stroke="#c0c0c0" stroke-width="1"/><line x1="8.5" y1="325" x2="8.5" y2="337" stroke="#c0c0c0" stroke-width="1"/>
<g transform="translate(13.5,326)"><defs><linearGradient id="gdn" x1="0" y1="0" x2="1" y2="1"><stop offset="0" stop-color="#ffffff"/><stop offset="1" stop-color="#a9cdf3"/></linearGradient></defs><path d="M0.5 0.5 H6 L8.5 3 V10.5 H0.5Z" fill="url(#gdn)" stroke="#8aa6c8" stroke-width="1"/><path d="M6 0.5 V3 H8.5" fill="#6a9ad8" stroke="#5a8ac8" stroke-width="0.8"/></g>
<g transform="translate(26.5,326)"><path d="M0.5 3.5 H4 L5 4.5 H9 V10.5 H0.5Z" fill="#e8b020" stroke="#b08010" stroke-width="0.8"/><path d="M0.5 10.5 L2 6 H11 L9.5 10.5Z" fill="#f8d860" stroke="#c09020" stroke-width="0.7"/><path d="M4 2.5 C6 0 8 0.5 9 3" fill="none" stroke="#20a020" stroke-width="1.6"/><path d="M7.5 3.5 L10.5 1.8 L10 5.5Z" fill="#20b020"/></g>
<g transform="translate(41.5,326)"><path d="M0.5 0.5 H9 V10.5 H0.5Z" fill="#3040c0"/><rect x="2" y="1" width="5.5" height="4.5" fill="#fff"/><rect x="2.5" y="7" width="4.5" height="3" fill="#e8e8f8"/><rect x="3" y="7.5" width="1.5" height="2" fill="#3040c0"/></g>
<line x1="55.5" y1="325" x2="55.5" y2="337" stroke="#c4c4c4" stroke-width="1"/><line x1="56.5" y1="325" x2="56.5" y2="337" stroke="#ffffff" stroke-width="1"/>
<line x1="61.5" y1="324" x2="61.5" y2="339" stroke="#c0c0c0" stroke-width="1"/><line x1="62.5" y1="324" x2="62.5" y2="339" stroke="#ffffff" stroke-width="1"/>
<rect x="65" y="325" width="3" height="12" fill="#d4d4d4"/><line x1="65.5" y1="325" x2="65.5" y2="337" stroke="#c0c0c0" stroke-width="1"/><line x1="67.5" y1="325" x2="67.5" y2="337" stroke="#c0c0c0" stroke-width="1"/>
<g transform="translate(70,326)"><path d="M0.8 3 L3 0.8 L10.5 8.3 L10.8 10.8 L8.3 10.5 Z" fill="#f0e0a0" stroke="#1a1a1a" stroke-width="1"/><path d="M2.2 4.2 L4.2 2.2 M4.5 4.5 L9 9" stroke="#c8a040" stroke-width="1"/><path d="M0.8 3 L3 0.8 L4.5 2.3 L2.3 4.5Z" fill="#1a1a1a"/></g>
<line x1="85.5" y1="325" x2="85.5" y2="337" stroke="#c4c4c4" stroke-width="1"/><line x1="86.5" y1="325" x2="86.5" y2="337" stroke="#ffffff" stroke-width="1"/>
<line x1="91.5" y1="324" x2="91.5" y2="339" stroke="#c0c0c0" stroke-width="1"/><line x1="92.5" y1="324" x2="92.5" y2="339" stroke="#ffffff" stroke-width="1"/>
<rect x="93" y="325" width="3" height="12" fill="#d4d4d4"/><line x1="93.5" y1="325" x2="93.5" y2="337" stroke="#c0c0c0" stroke-width="1"/><line x1="95.5" y1="325" x2="95.5" y2="337" stroke="#c0c0c0" stroke-width="1"/>
<g transform="translate(99.5,326)"><path d="M0.5 2.5 L3 0.5 H10 V8 L7 10 H0.5Z" fill="#a8a8a8"/></g>
<g transform="translate(114,326)"><path d="M0.5 1.5 Q0.5 0.5 3 0.5 H8 Q10 1 10 4 V8 Q10 10 7 10 H2 Q0.5 10 0.5 8Z" fill="#a8a8a8"/></g>
<line x1="128.5" y1="325" x2="128.5" y2="337" stroke="#c4c4c4" stroke-width="1"/><line x1="129.5" y1="325" x2="129.5" y2="337" stroke="#ffffff" stroke-width="1"/>
<g transform="translate(133,325.5)"><circle cx="5.5" cy="5.5" r="5.2" fill="#d81818" stroke="#a00000" stroke-width="0.6"/><path d="M3.5 3.5 L7.5 7.5 M7.5 3.5 L3.5 7.5" stroke="#fff" stroke-width="1.4"/></g>
<line x1="148" y1="325" x2="148" y2="337" stroke="#c4c4c4" stroke-width="1"/><line x1="149" y1="325" x2="149" y2="337" stroke="#ffffff" stroke-width="1"/>
<line x1="154.5" y1="324" x2="154.5" y2="339" stroke="#c0c0c0" stroke-width="1"/><line x1="155.5" y1="324" x2="155.5" y2="339" stroke="#ffffff" stroke-width="1"/>
<rect x="157" y="325" width="3" height="12" fill="#d4d4d4"/><line x1="157.5" y1="325" x2="157.5" y2="337" stroke="#c0c0c0" stroke-width="1"/><line x1="159.5" y1="325" x2="159.5" y2="337" stroke="#c0c0c0" stroke-width="1"/>
<g transform="translate(163.5,325.5)"><path d="M3 0.5 H8 L10.5 3 V8 L8 10.5 H3 L0.5 8 V3Z" fill="#1e78e8" stroke="#0a4aa0" stroke-width="0.7"/><text x="5.5" y="8.8" text-anchor="middle" font-family="Liberation Sans" font-weight="bold" font-size="9" fill="#fff">?</text></g>
<g transform="translate(179,326)"><rect x="1.0" y="1.5" width="1.7" height="8" fill="#6020a0"/><rect x="2.6" y="1" width="1.7" height="8" fill="#2040e0"/><rect x="4.2" y="1.5" width="1.7" height="8" fill="#20a040"/><rect x="5.8" y="1" width="1.7" height="8" fill="#e0c000"/><rect x="7.4" y="1.5" width="1.7" height="8" fill="#e02020"/><path d="M0.5 1 L9.5 1.5 V9.5 L0.5 9" fill="none" stroke="#202020" stroke-width="0.8"/></g>
<line x1="193.5" y1="325" x2="193.5" y2="337" stroke="#c4c4c4" stroke-width="1"/><line x1="194.5" y1="325" x2="194.5" y2="337" stroke="#ffffff" stroke-width="1"/>
<line x1="199.5" y1="324" x2="199.5" y2="339" stroke="#c0c0c0" stroke-width="1"/><line x1="200.5" y1="324" x2="200.5" y2="339" stroke="#ffffff" stroke-width="1"/>
<rect x="202" y="325" width="3" height="12" fill="#d4d4d4"/><line x1="202.5" y1="325" x2="202.5" y2="337" stroke="#c0c0c0" stroke-width="1"/><line x1="204.5" y1="325" x2="204.5" y2="337" stroke="#c0c0c0" stroke-width="1"/>
<g transform="translate(208,326)"><path d="M1 0.5 V10.5" stroke="#404040" stroke-width="1"/><rect x="1.5" y="0.5" width="6" height="4" fill="#d8c840"/><path d="M7 6 V10 M5 8 H9" stroke="#10b020" stroke-width="2"/></g>
<g transform="translate(221,326)"><path d="M0.5 1.5 H5 L10 4.5 V10 L0.5 8Z" fill="#c8b040" stroke="#606040" stroke-width="0.8"/><path d="M2 3 V9" stroke="#404040" stroke-width="0.8"/></g>
<g transform="translate(236,326)"><path d="M0.5 0.5 H6 L9 3.5 V10.5 H0.5Z" fill="#f0f0f0" stroke="#909090" stroke-width="0.8"/><path d="M2 3 H6 M2 5 H7 M2 7 H7" stroke="#a0a0a0" stroke-width="0.8"/></g>
<g transform="translate(250,326)"><rect x="0.5" y="0.5" width="5" height="4" fill="#c8b040"/><path d="M1 1 V10" stroke="#404040" stroke-width="0.8"/><path d="M7 1 L9.5 3 V8 L7 10" fill="none" stroke="#3040e0" stroke-width="1"/><circle cx="3" cy="9.5" r="1" fill="#3040e0"/></g>
<line x1="265.5" y1="325" x2="265.5" y2="337" stroke="#c4c4c4" stroke-width="1"/><line x1="266.5" y1="325" x2="266.5" y2="337" stroke="#ffffff" stroke-width="1"/>
<g transform="translate(269,326)"><path d="M0.5 5 H10" stroke="#6050a0" stroke-width="1.5"/><rect x="2" y="3" width="3" height="4" fill="#8070b0"/><path d="M7 3 L10 5 L7 7" fill="#c03070"/><circle cx="3" cy="8" r="1.5" fill="#30a0e0"/></g>
<g transform="translate(283,326)"><rect x="4" y="0.5" width="6.5" height="5" rx="1.5" fill="#f0e070" stroke="#404020" stroke-width="0.8"/><path d="M1 4 H4 M1 4 V9 M0.5 9.5 H9" stroke="#202020" stroke-width="1.2"/><rect x="2" y="7" width="3" height="2" fill="#e04040"/></g>
<line x1="299.5" y1="325" x2="299.5" y2="337" stroke="#c4c4c4" stroke-width="1"/><line x1="300.5" y1="325" x2="300.5" y2="337" stroke="#ffffff" stroke-width="1"/>
<g transform="translate(302,326)"><text x="0" y="6" font-family="Liberation Sans" font-weight="bold" font-size="5.5" fill="#2030e0">00</text><rect x="7" y="5.5" width="1.5" height="4" fill="#e02020"/></g>
<g transform="translate(317,326)"><rect x="0.5" y="0.5" width="9.5" height="10" fill="#f0e020"/><path d="M0.5 3 L3 1.5 L5 3 L7 1.5 L10 3 M0.5 6 L3 4.5 L5 6 L7 4.5 L10 6 M0.5 9 L3 7.5 L5 9 L7 7.5 L10 9" fill="none" stroke="#202020" stroke-width="1.1"/></g>
<line x1="332.5" y1="325" x2="332.5" y2="337" stroke="#c4c4c4" stroke-width="1"/><line x1="333.5" y1="325" x2="333.5" y2="337" stroke="#ffffff" stroke-width="1"/>
<line x1="339.5" y1="324" x2="339.5" y2="339" stroke="#c0c0c0" stroke-width="1"/><line x1="340.5" y1="324" x2="340.5" y2="339" stroke="#ffffff" stroke-width="1"/>
<rect x="342" y="325" width="3" height="12" fill="#d4d4d4"/><line x1="342.5" y1="325" x2="342.5" y2="337" stroke="#c0c0c0" stroke-width="1"/><line x1="344.5" y1="325" x2="344.5" y2="337" stroke="#c0c0c0" stroke-width="1"/>
<g transform="translate(348,326)"><rect x="0.5" y="0.5" width="7" height="10" fill="#e0ecf8" stroke="#2050a0" stroke-width="1"/><path d="M3 8 L10 2" stroke="#404060" stroke-width="1.5"/><path d="M2 7 L3.5 8.5" stroke="#e0a020" stroke-width="1.2"/></g>
<line x1="362.5" y1="325" x2="362.5" y2="337" stroke="#c4c4c4" stroke-width="1"/><line x1="363.5" y1="325" x2="363.5" y2="337" stroke="#ffffff" stroke-width="1"/>
<g transform="translate(366,326)"><path d="M0.5 0.5 H4 V10 H2 V5 H0.5Z M6 0.5 H9.5 V5 H8 V10 H6Z" fill="#a0a0a0"/></g>
<g transform="translate(380,326)"><path d="M3 4 Q5 1.5 7 4 Q8 7 4 8" fill="none" stroke="#a0a0a0" stroke-width="1.3"/><path d="M1.5 3 L4 3 L3 6Z" fill="#a0a0a0"/></g>
<line x1="395.5" y1="325" x2="395.5" y2="337" stroke="#c4c4c4" stroke-width="1"/><line x1="396.5" y1="325" x2="396.5" y2="337" stroke="#ffffff" stroke-width="1"/>
<line x1="401.5" y1="324" x2="401.5" y2="339" stroke="#c0c0c0" stroke-width="1"/><line x1="402.5" y1="324" x2="402.5" y2="339" stroke="#ffffff" stroke-width="1"/>
<line x1="2" y1="341.5" x2="796" y2="341.5" stroke="#a8a8a8" stroke-width="1"/>
<line x1="2" y1="342.5" x2="796" y2="342.5" stroke="#ffffff" stroke-width="1"/>
<line x1="3.4" y1="341.5" x2="3.4" y2="526" stroke="#d0d0d0" stroke-width="1"/>
<rect x="58" y="348.5" width="715.5" height="147.5" fill="#fff"/>
<line x1="58.5" y1="348.5" x2="58.5" y2="496" stroke="#9a9a9a" stroke-width="1" stroke-dasharray="1.6,2.15"/>
<text x="58.5" y="506.25" font-family="Liberation Sans" font-size="7" fill="#000" stroke="#000" stroke-width="0.22" text-anchor="middle">1 020</text>
<line x1="58.5" y1="496" x2="58.5" y2="498.5" stroke="#808080" stroke-width="1"/>
<line x1="80.5" y1="348.5" x2="80.5" y2="496" stroke="#9a9a9a" stroke-width="1" stroke-dasharray="1.6,2.15"/>
<text x="80.5" y="506.25" font-family="Liberation Sans" font-size="7" fill="#000" stroke="#000" stroke-width="0.22" text-anchor="middle">1 022</text>
<line x1="80.5" y1="496" x2="80.5" y2="498.5" stroke="#808080" stroke-width="1"/>
<line x1="102.5" y1="348.5" x2="102.5" y2="496" stroke="#9a9a9a" stroke-width="1" stroke-dasharray="1.6,2.15"/>
<text x="102.5" y="506.25" font-family="Liberation Sans" font-size="7" fill="#000" stroke="#000" stroke-width="0.22" text-anchor="middle">1 024</text>
<line x1="102.5" y1="496" x2="102.5" y2="498.5" stroke="#808080" stroke-width="1"/>
<line x1="124.5" y1="348.5" x2="124.5" y2="496" stroke="#9a9a9a" stroke-width="1" stroke-dasharray="1.6,2.15"/>
<text x="124.5" y="506.25" font-family="Liberation Sans" font-size="7" fill="#000" stroke="#000" stroke-width="0.22" text-anchor="middle">1 026</text>
<line x1="124.5" y1="496" x2="124.5" y2="498.5" stroke="#808080" stroke-width="1"/>
<line x1="146.5" y1="348.5" x2="146.5" y2="496" stroke="#9a9a9a" stroke-width="1" stroke-dasharray="1.6,2.15"/>
<text x="146.5" y="506.25" font-family="Liberation Sans" font-size="7" fill="#000" stroke="#000" stroke-width="0.22" text-anchor="middle">1 028</text>
<line x1="146.5" y1="496" x2="146.5" y2="498.5" stroke="#808080" stroke-width="1"/>
<line x1="168.5" y1="348.5" x2="168.5" y2="496" stroke="#9a9a9a" stroke-width="1" stroke-dasharray="1.6,2.15"/>
<text x="168.5" y="506.25" font-family="Liberation Sans" font-size="7" fill="#000" stroke="#000" stroke-width="0.22" text-anchor="middle">1 030</text>
<line x1="168.5" y1="496" x2="168.5" y2="498.5" stroke="#808080" stroke-width="1"/>
<line x1="190.5" y1="348.5" x2="190.5" y2="496" stroke="#9a9a9a" stroke-width="1" stroke-dasharray="1.6,2.15"/>
<text x="190.5" y="506.25" font-family="Liberation Sans" font-size="7" fill="#000" stroke="#000" stroke-width="0.22" text-anchor="middle">1 032</text>
<line x1="190.5" y1="496" x2="190.5" y2="498.5" stroke="#808080" stroke-width="1"/>
<line x1="212.5" y1="348.5" x2="212.5" y2="496" stroke="#9a9a9a" stroke-width="1" stroke-dasharray="1.6,2.15"/>
<text x="212.5" y="506.25" font-family="Liberation Sans" font-size="7" fill="#000" stroke="#000" stroke-width="0.22" text-anchor="middle">1 034</text>
<line x1="212.5" y1="496" x2="212.5" y2="498.5" stroke="#808080" stroke-width="1"/>
<line x1="234.5" y1="348.5" x2="234.5" y2="496" stroke="#9a9a9a" stroke-width="1" stroke-dasharray="1.6,2.15"/>
<text x="234.5" y="506.25" font-family="Liberation Sans" font-size="7" fill="#000" stroke="#000" stroke-width="0.22" text-anchor="middle">1 036</text>
<line x1="234.5" y1="496" x2="234.5" y2="498.5" stroke="#808080" stroke-width="1"/>
<line x1="256.5" y1="348.5" x2="256.5" y2="496" stroke="#9a9a9a" stroke-width="1" stroke-dasharray="1.6,2.15"/>
<text x="256.5" y="506.25" font-family="Liberation Sans" font-size="7" fill="#000" stroke="#000" stroke-width="0.22" text-anchor="middle">1 038</text>
<line x1="256.5" y1="496" x2="256.5" y2="498.5" stroke="#808080" stroke-width="1"/>
<line x1="278.5" y1="348.5" x2="278.5" y2="496" stroke="#9a9a9a" stroke-width="1" stroke-dasharray="1.6,2.15"/>
<text x="278.5" y="506.25" font-family="Liberation Sans" font-size="7" fill="#000" stroke="#000" stroke-width="0.22" text-anchor="middle">1 040</text>
<line x1="278.5" y1="496" x2="278.5" y2="498.5" stroke="#808080" stroke-width="1"/>
<line x1="300.5" y1="348.5" x2="300.5" y2="496" stroke="#9a9a9a" stroke-width="1" stroke-dasharray="1.6,2.15"/>
<text x="300.5" y="506.25" font-family="Liberation Sans" font-size="7" fill="#000" stroke="#000" stroke-width="0.22" text-anchor="middle">1 042</text>
<line x1="300.5" y1="496" x2="300.5" y2="498.5" stroke="#808080" stroke-width="1"/>
<line x1="322.5" y1="348.5" x2="322.5" y2="496" stroke="#9a9a9a" stroke-width="1" stroke-dasharray="1.6,2.15"/>
<text x="322.5" y="506.25" font-family="Liberation Sans" font-size="7" fill="#000" stroke="#000" stroke-width="0.22" text-anchor="middle">1 044</text>
<line x1="322.5" y1="496" x2="322.5" y2="498.5" stroke="#808080" stroke-width="1"/>
<line x1="344.5" y1="348.5" x2="344.5" y2="496" stroke="#9a9a9a" stroke-width="1" stroke-dasharray="1.6,2.15"/>
<text x="344.5" y="506.25" font-family="Liberation Sans" font-size="7" fill="#000" stroke="#000" stroke-width="0.22" text-anchor="middle">1 046</text>
<line x1="344.5" y1="496" x2="344.5" y2="498.5" stroke="#808080" stroke-width="1"/>
<line x1="366.5" y1="348.5" x2="366.5" y2="496" stroke="#9a9a9a" stroke-width="1" stroke-dasharray="1.6,2.15"/>
<text x="366.5" y="506.25" font-family="Liberation Sans" font-size="7" fill="#000" stroke="#000" stroke-width="0.22" text-anchor="middle">1 048</text>
<line x1="366.5" y1="496" x2="366.5" y2="498.5" stroke="#808080" stroke-width="1"/>
<line x1="388.5" y1="348.5" x2="388.5" y2="496" stroke="#9a9a9a" stroke-width="1" stroke-dasharray="1.6,2.15"/>
<text x="388.5" y="506.25" font-family="Liberation Sans" font-size="7" fill="#000" stroke="#000" stroke-width="0.22" text-anchor="middle">1 050</text>
<line x1="388.5" y1="496" x2="388.5" y2="498.5" stroke="#808080" stroke-width="1"/>
<line x1="410.5" y1="348.5" x2="410.5" y2="496" stroke="#9a9a9a" stroke-width="1" stroke-dasharray="1.6,2.15"/>
<text x="410.5" y="506.25" font-family="Liberation Sans" font-size="7" fill="#000" stroke="#000" stroke-width="0.22" text-anchor="middle">1 052</text>
<line x1="410.5" y1="496" x2="410.5" y2="498.5" stroke="#808080" stroke-width="1"/>
<line x1="432.5" y1="348.5" x2="432.5" y2="496" stroke="#9a9a9a" stroke-width="1" stroke-dasharray="1.6,2.15"/>
<text x="432.5" y="506.25" font-family="Liberation Sans" font-size="7" fill="#000" stroke="#000" stroke-width="0.22" text-anchor="middle">1 054</text>
<line x1="432.5" y1="496" x2="432.5" y2="498.5" stroke="#808080" stroke-width="1"/>
<line x1="454.5" y1="348.5" x2="454.5" y2="496" stroke="#9a9a9a" stroke-width="1" stroke-dasharray="1.6,2.15"/>
<text x="454.5" y="506.25" font-family="Liberation Sans" font-size="7" fill="#000" stroke="#000" stroke-width="0.22" text-anchor="middle">1 056</text>
<line x1="454.5" y1="496" x2="454.5" y2="498.5" stroke="#808080" stroke-width="1"/>
<line x1="476.5" y1="348.5" x2="476.5" y2="496" stroke="#9a9a9a" stroke-width="1" stroke-dasharray="1.6,2.15"/>
<text x="476.5" y="506.25" font-family="Liberation Sans" font-size="7" fill="#000" stroke="#000" stroke-width="0.22" text-anchor="middle">1 058</text>
<line x1="476.5" y1="496" x2="476.5" y2="498.5" stroke="#808080" stroke-width="1"/>
<line x1="498.5" y1="348.5" x2="498.5" y2="496" stroke="#9a9a9a" stroke-width="1" stroke-dasharray="1.6,2.15"/>
<text x="498.5" y="506.25" font-family="Liberation Sans" font-size="7" fill="#000" stroke="#000" stroke-width="0.22" text-anchor="middle">1 060</text>
<line x1="498.5" y1="496" x2="498.5" y2="498.5" stroke="#808080" stroke-width="1"/>
<line x1="520.5" y1="348.5" x2="520.5" y2="496" stroke="#9a9a9a" stroke-width="1" stroke-dasharray="1.6,2.15"/>
<text x="520.5" y="506.25" font-family="Liberation Sans" font-size="7" fill="#000" stroke="#000" stroke-width="0.22" text-anchor="middle">1 062</text>
<line x1="520.5" y1="496" x2="520.5" y2="498.5" stroke="#808080" stroke-width="1"/>
<line x1="542.5" y1="348.5" x2="542.5" y2="496" stroke="#9a9a9a" stroke-width="1" stroke-dasharray="1.6,2.15"/>
<text x="542.5" y="506.25" font-family="Liberation Sans" font-size="7" fill="#000" stroke="#000" stroke-width="0.22" text-anchor="middle">1 064</text>
<line x1="542.5" y1="496" x2="542.5" y2="498.5" stroke="#808080" stroke-width="1"/>
<line x1="564.5" y1="348.5" x2="564.5" y2="496" stroke="#9a9a9a" stroke-width="1" stroke-dasharray="1.6,2.15"/>
<text x="564.5" y="506.25" font-family="Liberation Sans" font-size="7" fill="#000" stroke="#000" stroke-width="0.22" text-anchor="middle">1 066</text>
<line x1="564.5" y1="496" x2="564.5" y2="498.5" stroke="#808080" stroke-width="1"/>
<line x1="586.5" y1="348.5" x2="586.5" y2="496" stroke="#9a9a9a" stroke-width="1" stroke-dasharray="1.6,2.15"/>
<text x="586.5" y="506.25" font-family="Liberation Sans" font-size="7" fill="#000" stroke="#000" stroke-width="0.22" text-anchor="middle">1 068</text>
<line x1="586.5" y1="496" x2="586.5" y2="498.5" stroke="#808080" stroke-width="1"/>
<line x1="608.5" y1="348.5" x2="608.5" y2="496" stroke="#9a9a9a" stroke-width="1" stroke-dasharray="1.6,2.15"/>
<text x="608.5" y="506.25" font-family="Liberation Sans" font-size="7" fill="#000" stroke="#000" stroke-width="0.22" text-anchor="middle">1 070</text>
<line x1="608.5" y1="496" x2="608.5" y2="498.5" stroke="#808080" stroke-width="1"/>
<line x1="630.5" y1="348.5" x2="630.5" y2="496" stroke="#9a9a9a" stroke-width="1" stroke-dasharray="1.6,2.15"/>
<text x="630.5" y="506.25" font-family="Liberation Sans" font-size="7" fill="#000" stroke="#000" stroke-width="0.22" text-anchor="middle">1 072</text>
<line x1="630.5" y1="496" x2="630.5" y2="498.5" stroke="#808080" stroke-width="1"/>
<line x1="652.5" y1="348.5" x2="652.5" y2="496" stroke="#9a9a9a" stroke-width="1" stroke-dasharray="1.6,2.15"/>
<text x="652.5" y="506.25" font-family="Liberation Sans" font-size="7" fill="#000" stroke="#000" stroke-width="0.22" text-anchor="middle">1 074</text>
<line x1="652.5" y1="496" x2="652.5" y2="498.5" stroke="#808080" stroke-width="1"/>
<line x1="674.5" y1="348.5" x2="674.5" y2="496" stroke="#9a9a9a" stroke-width="1" stroke-dasharray="1.6,2.15"/>
<text x="674.5" y="506.25" font-family="Liberation Sans" font-size="7" fill="#000" stroke="#000" stroke-width="0.22" text-anchor="middle">1 076</text>
<line x1="674.5" y1="496" x2="674.5" y2="498.5" stroke="#808080" stroke-width="1"/>
<line x1="696.5" y1="348.5" x2="696.5" y2="496" stroke="#9a9a9a" stroke-width="1" stroke-dasharray="1.6,2.15"/>
<text x="696.5" y="506.25" font-family="Liberation Sans" font-size="7" fill="#000" stroke="#000" stroke-width="0.22" text-anchor="middle">1 078</text>
<line x1="696.5" y1="496" x2="696.5" y2="498.5" stroke="#808080" stroke-width="1"/>
<line x1="718.5" y1="348.5" x2="718.5" y2="496" stroke="#9a9a9a" stroke-width="1" stroke-dasharray="1.6,2.15"/>
<text x="718.5" y="506.25" font-family="Liberation Sans" font-size="7" fill="#000" stroke="#000" stroke-width="0.22" text-anchor="middle">1 080</text>
<line x1="718.5" y1="496" x2="718.5" y2="498.5" stroke="#808080" stroke-width="1"/>
<line x1="740.5" y1="348.5" x2="740.5" y2="496" stroke="#9a9a9a" stroke-width="1" stroke-dasharray="1.6,2.15"/>
<text x="740.5" y="506.25" font-family="Liberation Sans" font-size="7" fill="#000" stroke="#000" stroke-width="0.22" text-anchor="middle">1 082</text>
<line x1="740.5" y1="496" x2="740.5" y2="498.5" stroke="#808080" stroke-width="1"/>
<line x1="762.5" y1="348.5" x2="762.5" y2="496" stroke="#9a9a9a" stroke-width="1" stroke-dasharray="1.6,2.15"/>
<text x="762.5" y="506.25" font-family="Liberation Sans" font-size="7" fill="#000" stroke="#000" stroke-width="0.22" text-anchor="middle">1 084</text>
<line x1="762.5" y1="496" x2="762.5" y2="498.5" stroke="#808080" stroke-width="1"/>
<line x1="58" y1="489.5" x2="773.5" y2="489.5" stroke="#9a9a9a" stroke-width="1" stroke-dasharray="1.6,2.15"/>
<text x="54.5" y="492" font-family="Liberation Sans" font-size="7" fill="#000" stroke="#000" stroke-width="0.22" text-anchor="end">0</text>
<line x1="55" y1="489.5" x2="58" y2="489.5" stroke="#808080" stroke-width="1"/>
<line x1="58" y1="467.5" x2="773.5" y2="467.5" stroke="#9a9a9a" stroke-width="1" stroke-dasharray="1.6,2.15"/>
<text x="54.5" y="470" font-family="Liberation Sans" font-size="7" fill="#000" stroke="#000" stroke-width="0.22" text-anchor="end">500</text>
<line x1="55" y1="467.5" x2="58" y2="467.5" stroke="#808080" stroke-width="1"/>
<line x1="58" y1="446.5" x2="773.5" y2="446.5" stroke="#9a9a9a" stroke-width="1" stroke-dasharray="1.6,2.15"/>
<text x="54.5" y="449" font-family="Liberation Sans" font-size="7" fill="#000" stroke="#000" stroke-width="0.22" text-anchor="end">1 000</text>
<line x1="55" y1="446.5" x2="58" y2="446.5" stroke="#808080" stroke-width="1"/>
<line x1="58" y1="424.5" x2="773.5" y2="424.5" stroke="#9a9a9a" stroke-width="1" stroke-dasharray="1.6,2.15"/>
<text x="54.5" y="427" font-family="Liberation Sans" font-size="7" fill="#000" stroke="#000" stroke-width="0.22" text-anchor="end">1 500</text>
<line x1="55" y1="424.5" x2="58" y2="424.5" stroke="#808080" stroke-width="1"/>
<line x1="58" y1="402.5" x2="773.5" y2="402.5" stroke="#9a9a9a" stroke-width="1" stroke-dasharray="1.6,2.15"/>
<text x="54.5" y="405" font-family="Liberation Sans" font-size="7" fill="#000" stroke="#000" stroke-width="0.22" text-anchor="end">2 000</text>
<line x1="55" y1="402.5" x2="58" y2="402.5" stroke="#808080" stroke-width="1"/>
<line x1="58" y1="381.5" x2="773.5" y2="381.5" stroke="#9a9a9a" stroke-width="1" stroke-dasharray="1.6,2.15"/>
<text x="54.5" y="384" font-family="Liberation Sans" font-size="7" fill="#000" stroke="#000" stroke-width="0.22" text-anchor="end">2 500</text>
<line x1="55" y1="381.5" x2="58" y2="381.5" stroke="#808080" stroke-width="1"/>
<line x1="58" y1="359.5" x2="773.5" y2="359.5" stroke="#9a9a9a" stroke-width="1" stroke-dasharray="1.6,2.15"/>
<text x="54.5" y="362" font-family="Liberation Sans" font-size="7" fill="#000" stroke="#000" stroke-width="0.22" text-anchor="end">3 000</text>
<line x1="55" y1="359.5" x2="58" y2="359.5" stroke="#808080" stroke-width="1"/>
<polyline points="255.6,488.24 256.53,488.2 257.45,488.15 258.38,488.09 259.31,488.02 260.24,487.94 261.16,487.85 262.09,487.75 263.02,487.64 263.94,487.53 264.87,487.41 265.8,487.28 266.73,487.14 267.65,487 268.58,486.85 269.51,486.69 270.43,486.53 271.36,486.36 272.29,486.19 273.21,486.01 274.14,485.83 275.07,485.64 276,485.45 276.92,485.26 277.85,485.06 278.78,484.87 279.7,484.66 280.63,484.46 281.56,484.23 282.49,483.97 283.41,483.68 284.34,483.37 285.27,483.04 286.19,482.68 287.12,482.3 288.05,481.91 288.98,481.5 289.9,481.07 290.83,480.63 291.76,480.17 292.68,479.71 293.61,479.23 294.54,478.75 295.46,478.26 296.39,477.76 297.32,477.26 298.25,476.76 299.17,476.25 300.1,475.71 301.03,475.16 301.95,474.58 302.88,473.98 303.81,473.36 304.74,472.72 305.66,472.06 306.59,471.37 307.52,470.67 308.44,469.95 309.37,469.21 310.3,468.44 311.23,467.66 312.15,466.83 313.08,465.94 314.01,464.99 314.93,464.01 315.86,462.99 316.79,461.94 317.72,460.89 318.64,459.83 319.57,458.77 320.5,457.73 321.42,456.72 322.35,455.74 323.28,454.78 324.2,453.83 325.13,452.88 326.06,451.91 326.99,450.92 327.91,449.88 328.84,448.8 329.77,447.65 330.69,446.46 331.62,445.24 332.55,443.98 333.48,442.68 334.4,441.35 335.33,439.99 336.26,438.6 337.18,437.18 338.11,435.74 339.04,434.27 339.97,432.77 340.89,431.26 341.82,429.72 342.75,428.16 343.67,426.59 344.6,425 345.53,423.39 346.45,421.77 347.38,420.09 348.31,418.35 349.24,416.56 350.16,414.72 351.09,412.86 352.02,410.97 352.94,409.06 353.87,407.16 354.8,405.25 355.73,403.37 356.65,401.5 357.58,399.62 358.51,397.7 359.43,395.75 360.36,393.8 361.29,391.86 362.22,389.95 363.14,388.08 364.07,386.28 365,384.56 365.92,382.93 366.85,381.33 367.78,379.74 368.71,378.18 369.63,376.65 370.56,375.16 371.49,373.72 372.41,372.35 373.34,371.05 374.27,369.83 375.19,368.71 376.12,367.68 377.05,366.68 377.98,365.66 378.9,364.63 379.83,363.61 380.76,362.6 381.68,361.62 382.61,360.68 383.54,359.78 384.47,358.94 385.39,358.17 386.32,357.49 387.25,356.89 388.17,356.39 389.1,356 390.03,355.74 390.96,355.61 391.88,355.62 392.81,355.77 393.74,356.06 394.66,356.47 395.59,356.98 396.52,357.6 397.44,358.3 398.37,359.08 399.3,359.93 400.23,360.83 401.15,361.78 402.08,362.77 403.01,363.78 403.93,364.8 404.86,365.83 405.79,366.85 406.72,367.85 407.64,368.89 408.57,370.03 409.5,371.26 410.42,372.58 411.35,373.96 412.28,375.41 413.21,376.9 414.13,378.44 415.06,380.01 415.99,381.6 416.91,383.21 417.84,384.85 418.77,386.58 419.69,388.4 420.62,390.27 421.55,392.19 422.48,394.13 423.4,396.08 424.33,398.03 425.26,399.94 426.18,401.82 427.11,403.69 428.04,405.58 428.97,407.48 429.89,409.39 430.82,411.29 431.75,413.17 432.67,415.04 433.6,416.86 434.53,418.65 435.46,420.38 436.38,422.05 437.31,423.66 438.24,425.27 439.16,426.86 440.09,428.43 441.02,429.98 441.95,431.52 442.87,433.03 443.8,434.52 444.73,435.98 445.65,437.43 446.58,438.84 447.51,440.22 448.43,441.58 449.36,442.9 450.29,444.19 451.22,445.45 452.14,446.67 453.07,447.85 454,448.99 454.92,450.06 455.85,451.09 456.78,452.08 457.71,453.04 458.63,453.99 459.56,454.94 460.49,455.9 461.41,456.89 462.34,457.91 463.27,458.95 464.2,460.01 465.12,461.07 466.05,462.12 466.98,463.16 467.9,464.18 468.83,465.16 469.76,466.09 470.68,466.98 471.61,467.8 472.54,468.58 473.47,469.33 474.39,470.07 475.32,470.79 476.25,471.49 477.17,472.17 478.1,472.83 479.03,473.47 479.96,474.08 480.88,474.68 481.81,475.25 482.74,475.81 483.66,476.34 484.59,476.85 485.52,477.35 486.45,477.85 487.37,478.34 488.3,478.83 489.23,479.31 490.15,479.79 491.08,480.25 492.01,480.7 492.94,481.14 493.86,481.57 494.79,481.98 495.72,482.37 496.64,482.74 497.57,483.09 498.5,483.42 499.42,483.73 500.35,484.01 501.28,484.27 502.21,484.49 503.13,484.7 504.06,484.9 504.99,485.1 505.91,485.29 506.84,485.49 507.77,485.68 508.7,485.86 509.62,486.04 510.55,486.22 511.48,486.39 512.4,486.56 513.33,486.72 514.26,486.87 515.19,487.02 516.11,487.17 517.04,487.3 517.97,487.43 518.89,487.55 519.82,487.66 520.75,487.77 521.67,487.86 522.6,487.95 523.53,488.03 524.46,488.1 525.38,488.16 526.31,488.21 527.24,488.24 528.16,488.27 529.09,488.29 530.02,488.3 530.95,488.31 531.87,488.32 532.8,488.34" fill="none" stroke="#4444a4" stroke-width="1.1"/>
<line x1="58" y1="489.2" x2="256" y2="489.2" stroke="#8484c4" stroke-width="1.8"/>
<line x1="533" y1="489.2" x2="773.5" y2="489.2" stroke="#8484c4" stroke-width="1.8"/>
<line x1="390.8" y1="422" x2="390.8" y2="495" stroke="#ff6868" stroke-width="1.6"/>
<line x1="349" y1="422" x2="433" y2="422" stroke="#ff5a5a" stroke-width="1.4"/>
<path d="M346.3 422 l5 -2.3 v4.6z M435.3 422 l-5 -2.3 v4.6z" fill="#ff5a5a"/>
<text x="390.8" y="418" font-family="Liberation Sans" font-size="7" fill="#333" stroke="#333" stroke-width="0.22" text-anchor="middle">8,1 nm</text>
<rect x="392" y="485.5" width="39.5" height="6" fill="#fff"/>
<text x="392.68" y="490.6" font-family="Liberation Sans" font-size="7" fill="#222" stroke="#222" stroke-width="0.22" text-anchor="start" textLength="37.74" lengthAdjust="spacingAndGlyphs">1 050,24 nm</text>
<path d="M57 496 V347.5 H773.5" fill="none" stroke="#ffffff" stroke-width="1"/><path d="M58 349.1 H773.0 V496" fill="none" stroke="#767676" stroke-width="1.3"/><path d="M773.0 350.5 V496" fill="none" stroke="#3a3a3a" stroke-width="1.1"/><path d="M58.75 348.5 V495.25 H773.5" fill="none" stroke="#000" stroke-width="1.6"/>
<text x="385.81" y="514.4" font-family="Liberation Sans" font-size="7.25" font-weight="bold" fill="#111" text-anchor="start" textLength="59.02" lengthAdjust="spacingAndGlyphs">Wavelength (nm)</text>
<g transform="translate(34.2,433) rotate(-90)"><text x="-0.42" y="0" font-family="Liberation Sans" font-size="7" font-weight="bold" fill="#111" text-anchor="start" textLength="23.14" lengthAdjust="spacingAndGlyphs">S (a.u.)</text></g>
<line x1="2" y1="525.5" x2="797" y2="525.5" stroke="#d8d8d8" stroke-width="1"/>
<line x1="2" y1="526.5" x2="797" y2="526.5" stroke="#a0a0a0" stroke-width="1"/>
<line x1="3.5" y1="526.5" x2="3.5" y2="536.5" stroke="#a0a0a0" stroke-width="1"/>
<line x1="226.5" y1="527" x2="226.5" y2="536.5" stroke="#ffffff" stroke-width="1"/>
<line x1="229.5" y1="526.5" x2="229.5" y2="536.5" stroke="#a0a0a0" stroke-width="1"/>
<line x1="276.5" y1="527" x2="276.5" y2="536.5" stroke="#ffffff" stroke-width="1"/>
<line x1="279.5" y1="526.5" x2="279.5" y2="536.5" stroke="#a0a0a0" stroke-width="1"/>
<line x1="326.5" y1="527" x2="326.5" y2="536.5" stroke="#ffffff" stroke-width="1"/>
<line x1="329.5" y1="526.5" x2="329.5" y2="536.5" stroke="#a0a0a0" stroke-width="1"/>
<line x1="376.5" y1="527" x2="376.5" y2="536.5" stroke="#ffffff" stroke-width="1"/>
<line x1="379.5" y1="526.5" x2="379.5" y2="536.5" stroke="#a0a0a0" stroke-width="1"/>
<line x1="796.5" y1="527" x2="796.5" y2="536.5" stroke="#ffffff" stroke-width="1"/>
<text x="379.54" y="534.4" font-family="Liberation Sans" font-size="7.6" fill="#000" stroke="#000" stroke-width="0.22" text-anchor="start" textLength="57.81" lengthAdjust="spacingAndGlyphs">No driver loaded.</text>
<path d="M786 536 L795 527" stroke="#a8a8a8" stroke-width="1"/>
<path d="M789 536 L795 530" stroke="#a8a8a8" stroke-width="1"/>
<path d="M792 536 L795 533" stroke="#a8a8a8" stroke-width="1"/></svg></body></html>
